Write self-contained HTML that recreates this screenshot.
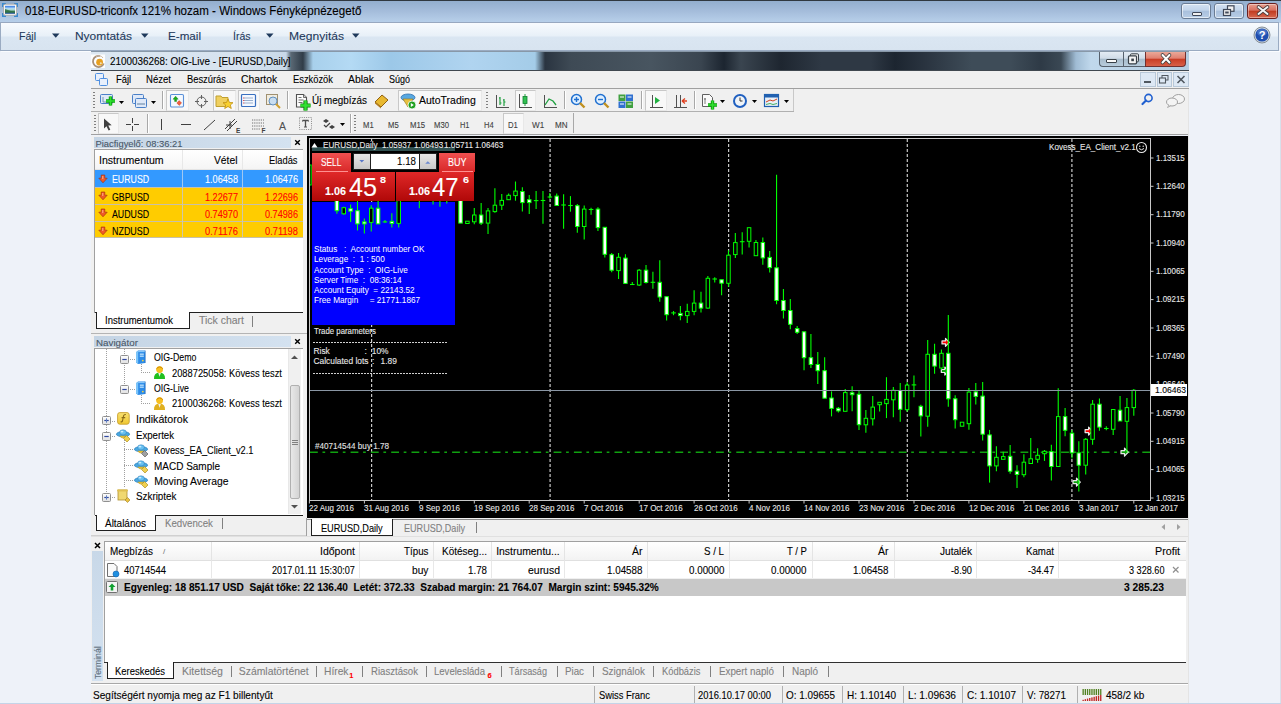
<!DOCTYPE html><html><head><meta charset="utf-8"><style>
*{margin:0;padding:0;box-sizing:border-box}
html,body{width:1281px;height:704px;overflow:hidden;background:#eef2f9;font-family:"Liberation Sans",sans-serif;position:relative}
.a{position:absolute}
.t{position:absolute;white-space:pre;line-height:1;-webkit-text-stroke:0.1px currentColor}
svg.a{overflow:visible}
</style></head><body>
<div class="a" style="left:0px;top:0px;width:1281px;height:1px;background:#303840;"></div>
<div class="a" style="left:0px;top:1px;width:1281px;height:22px;background:linear-gradient(#93aece,#a6bedc 50%,#b9d1eb);"></div>
<svg class="a" style="left:0px;top:0px" width="22" height="22"><path d="M2,3h4v1.5h-2.5v2.5h-1.5z M18,3h-4v1.5h2.5v2.5h1.5z M2,17h4v-1.5h-2.5v-2.5h-1.5z M18,17h-4v-1.5h2.5v-2.5h1.5z" fill="#3a8ad0"/><rect x="3.6" y="4.2" width="13" height="11" rx="1.5" fill="#fbfbfb" stroke="#a09890" stroke-width="0.7"/><defs><linearGradient id="pvsky" x1="0" y1="0" x2="0" y2="1"><stop offset="0" stop-color="#2a70e0"/><stop offset="0.4" stop-color="#c8ecf8"/><stop offset="0.75" stop-color="#3a8050"/><stop offset="1" stop-color="#1a4aa0"/></linearGradient></defs><rect x="5" y="5.8" width="10" height="8" fill="url(#pvsky)"/><path d="M5,9 Q8,10 11,11 L15,11.5 L15,12.5 L5,12.5z" fill="#2a6a40" opacity="0.8"/></svg>
<div class="t" style="left:25.40px;top:4.59px;font-size:12.3px;color:#000;transform:scaleX(0.9409);transform-origin:0 0;">018-EURUSD-triconfx 121% hozam - Windows Fényképnézegető</div>
<div class="a" style="left:1181px;top:2.5px;width:30px;height:16px;background:linear-gradient(#d4e2f2 0%,#c2d4ea 45%,#a9c0dc 50%,#b8cde6 100%);border:1px solid #6a7c94;border-radius:3px;box-shadow:inset 0 0 0 1px rgba(255,255,255,0.6)"></div>
<div class="a" style="left:1214px;top:2.5px;width:30px;height:16px;background:linear-gradient(#d4e2f2 0%,#c2d4ea 45%,#a9c0dc 50%,#b8cde6 100%);border:1px solid #6a7c94;border-radius:3px;box-shadow:inset 0 0 0 1px rgba(255,255,255,0.6)"></div>
<div class="a" style="left:1247px;top:2.5px;width:31px;height:16px;background:linear-gradient(#e8a090 0%,#d87060 45%,#c03a20 50%,#d86850 100%);border:1px solid #6a2020;border-radius:3px;box-shadow:inset 0 0 0 1px rgba(255,255,255,0.4)"></div>
<div class="a" style="left:1191.5px;top:12px;width:10px;height:4px;background:#f0f0f0;border:1px solid #404858;border-radius:1px"></div>
<svg class="a" style="left:1222px;top:5px" width="14" height="12"><rect x="5.5" y="0.8" width="6.5" height="5.5" fill="#f0f0f0" stroke="#404858" stroke-width="1.2"/><rect x="1.5" y="4.5" width="7" height="6" fill="#f0f0f0" stroke="#404858" stroke-width="1.2"/><rect x="3.2" y="6.5" width="3.5" height="2" fill="#404858"/></svg>
<svg class="a" style="left:1255px;top:5px" width="16" height="11"><path d="M3.5,2 L12.5,9 M12.5,2 L3.5,9" stroke="#4a3a3a" stroke-width="3.6" stroke-linecap="round"/><path d="M3.5,2 L12.5,9 M12.5,2 L3.5,9" stroke="#f4f4f4" stroke-width="2" stroke-linecap="round"/></svg>
<div class="a" style="left:0px;top:22px;width:1279px;height:29px;background:linear-gradient(#f8fbfe 0%,#e8f0f8 48%,#dae6f2 52%,#d8e4f0 100%);border:1px solid #9aabc2;border-top-color:#98a8c0"></div>
<div class="a" style="left:1px;top:51px;width:1279px;height:1px;background:#fafcff;"></div>
<div class="a" style="left:1280px;top:51px;width:1px;height:652px;background:#d8e0ea;"></div>
<div class="t" style="left:18.50px;top:30.81px;font-size:11.8px;color:#1e395b;transform:scaleX(0.8941);transform-origin:0 0;">Fájl</div>
<div class="t" style="left:75.00px;top:30.81px;font-size:11.8px;color:#1e395b;transform:scaleX(1.0107);transform-origin:0 0;">Nyomtatás</div>
<div class="t" style="left:168.00px;top:30.81px;font-size:11.8px;color:#1e395b;transform:scaleX(0.9870);transform-origin:0 0;">E-mail</div>
<div class="t" style="left:233.00px;top:30.81px;font-size:11.8px;color:#1e395b;transform:scaleX(0.8897);transform-origin:0 0;">Írás</div>
<div class="t" style="left:289.00px;top:30.81px;font-size:11.8px;color:#1e395b;transform:scaleX(1.0227);transform-origin:0 0;">Megnyitás</div>
<svg class="a" style="left:52px;top:33px" width="8" height="6"><polygon points="0,0.5 7.5,0.5 3.75,4.8" fill="#1e395b"/></svg>
<svg class="a" style="left:141px;top:33px" width="8" height="6"><polygon points="0,0.5 7.5,0.5 3.75,4.8" fill="#1e395b"/></svg>
<svg class="a" style="left:266px;top:33px" width="8" height="6"><polygon points="0,0.5 7.5,0.5 3.75,4.8" fill="#1e395b"/></svg>
<svg class="a" style="left:352px;top:33px" width="8" height="6"><polygon points="0,0.5 7.5,0.5 3.75,4.8" fill="#1e395b"/></svg>
<svg class="a" style="left:1253px;top:26px" width="18" height="18"><circle cx="9" cy="9" r="8" fill="#d0d8e0" stroke="#707880" stroke-width="0.8"/><circle cx="9" cy="9" r="6.6" fill="#1f4fb0"/><ellipse cx="9" cy="6.5" rx="5" ry="3.5" fill="#6a90d8" opacity="0.5"/><text x="9" y="13.2" font-family="Liberation Sans" font-weight="bold" font-size="11" fill="#fff" text-anchor="middle">?</text></svg>
<div class="a" style="left:0px;top:703px;width:1281px;height:1px;background:#c4d4e8;"></div>
<div class="a" style="left:91px;top:51px;width:1098px;height:20px;background:linear-gradient(90deg,#dce7f2 0px,#d6e2ef 150px,#c8d8e8 195px,#5a6874 200px,#303c48 212px,#a8d0ec 222px,#b4daf4 260px,#9cc8e8 300px,#b0d4f0 380px,#a4cce8 444px,#2a3440 454px,#3e4a55 480px,#485560 560px,#3a4550 610px,#1c2530 633px,#3a4550 650px,#1e2630 690px,#2e3844 730px,#2e3844 780px,#1c2530 804px,#2a3440 835px,#3e4c58 880px,#3e4c58 920px,#2e3a46 950px,#3a4854 970px,#a0bcd4 985px,#c0d8ec 1000px,#b4cce0 1098px);"></div>
<div class="a" style="left:91px;top:51px;width:1098px;height:1px;background:#8898a8;"></div>
<div class="a" style="left:91px;top:70px;width:1098px;height:1px;background:#404850;"></div>
<svg class="a" style="left:91px;top:54px" width="15" height="15"><rect x="0" y="0.5" width="14" height="13.5" fill="#fcfdfe"/><path d="M9,2 A5.6,5.6 0 1,0 12.8,9.5" fill="none" stroke="#a89078" stroke-width="1.8"/><path d="M5,3 A4.5,4.5 0 0,1 12,4" fill="none" stroke="#c8b8a8" stroke-width="1"/><circle cx="8.6" cy="8.2" r="3.4" fill="#e8a020"/><circle cx="9.8" cy="9.2" r="1" fill="#f0e0c0"/></svg>
<div class="t" style="left:109.60px;top:55.93px;font-size:10.6px;color:#000;transform:scaleX(0.9323);transform-origin:0 0;">2100036268: OIG-Live - [EURUSD,Daily]</div>
<div class="a" style="left:1098.5px;top:52px;width:24px;height:15px;background:linear-gradient(#e4ecf4 0%,#d0dce8 45%,#a8bccc 50%,#b8ccdc 100%);border:1px solid #56606c;border-right:none;border-top:none;border-radius:0 0 0 4px"></div>
<div class="a" style="left:1122.5px;top:52px;width:23px;height:15px;background:linear-gradient(#e4ecf4 0%,#d0dce8 45%,#a8bccc 50%,#b8ccdc 100%);border-left:1px solid #56606c;border-bottom:1px solid #56606c"></div>
<div class="a" style="left:1145.4px;top:52px;width:41px;height:15px;background:linear-gradient(#eaa898 0%,#e08070 45%,#c83c24 50%,#d86048 100%);border:1px solid #703030;border-top:none;border-radius:0 0 4px 0"></div>
<div class="a" style="left:1106px;top:59px;width:10.5px;height:4px;background:#fafafa;border:1px solid #384048;border-radius:1px"></div>
<svg class="a" style="left:1127px;top:53px" width="14" height="12"><rect x="3.5" y="0.8" width="8" height="8" rx="1" fill="#e8e8e8" stroke="#384048" stroke-width="1"/><rect x="1.5" y="2.8" width="8" height="8" rx="1" fill="#f4f4f4" stroke="#384048" stroke-width="1.2"/><rect x="4.3" y="5.6" width="2.6" height="2.6" fill="#384048"/></svg>
<svg class="a" style="left:1158px;top:53px" width="16" height="12"><path d="M4.5,2 L11.5,9.5 M11.5,2 L4.5,9.5" stroke="#404040" stroke-width="3.6" stroke-linecap="round"/><path d="M4.5,2 L11.5,9.5 M11.5,2 L4.5,9.5" stroke="#ffffff" stroke-width="2" stroke-linecap="round"/></svg>
<div class="a" style="left:91px;top:71px;width:1098px;height:17.5px;background:#f0f0f0;"></div>
<div class="a" style="left:91px;top:88px;width:1098px;height:1px;background:#a0a0a0;"></div>
<svg class="a" style="left:95px;top:73px" width="13" height="13"><rect x="0.5" y="0.5" width="8" height="7" rx="1" fill="#e8f0fc" stroke="#5090e0"/><rect x="4.5" y="5.5" width="8" height="7" rx="1" fill="#e8f0fc" stroke="#5090e0"/></svg>
<div class="t" style="left:115.50px;top:74.88px;font-size:10.3px;color:#000;transform:scaleX(0.9158);transform-origin:0 0;">Fájl</div>
<div class="t" style="left:146.00px;top:74.88px;font-size:10.3px;color:#000;transform:scaleX(0.9291);transform-origin:0 0;">Nézet</div>
<div class="t" style="left:187.00px;top:74.88px;font-size:10.3px;color:#000;transform:scaleX(0.9083);transform-origin:0 0;">Beszúrás</div>
<div class="t" style="left:241.00px;top:74.88px;font-size:10.3px;color:#000;">Chartok</div>
<div class="t" style="left:292.50px;top:74.88px;font-size:10.3px;color:#000;transform:scaleX(0.9075);transform-origin:0 0;">Eszközök</div>
<div class="t" style="left:348.00px;top:74.88px;font-size:10.3px;color:#000;transform:scaleX(1.0091);transform-origin:0 0;">Ablak</div>
<div class="t" style="left:389.00px;top:74.88px;font-size:10.3px;color:#000;transform:scaleX(0.8730);transform-origin:0 0;">Súgó</div>
<div class="a" style="left:1156.5px;top:72px;width:15.5px;height:14.5px;background:#dde8f4;border:1px solid #b8c8d8"></div>
<div class="a" style="left:1173px;top:72px;width:15.5px;height:14.5px;background:#dde8f4;border:1px solid #b8c8d8"></div>
<div class="a" style="left:1140px;top:72px;width:15.5px;height:14.5px;background:#dde8f4;border:1px solid #b8c8d8"></div>
<div class="a" style="left:1144px;top:81px;width:7px;height:1.6px;background:#505860;"></div>
<svg class="a" style="left:1159px;top:75px" width="10" height="9"><rect x="3" y="0.5" width="6" height="4.5" fill="none" stroke="#505860" stroke-width="1"/><rect x="0.5" y="3" width="6" height="5" fill="#dde8f4" stroke="#505860" stroke-width="1.1"/></svg>
<svg class="a" style="left:1176px;top:75px" width="10" height="9"><path d="M1.5,1 L8.5,8 M8.5,1 L1.5,8" stroke="#505860" stroke-width="1.6"/></svg>
<div class="a" style="left:91px;top:89px;width:1098px;height:45.5px;background:#f0f0f0;"></div>
<div class="a" style="left:91px;top:111px;width:703px;height:1px;background:#b0b0b0;"></div>
<div class="a" style="left:91px;top:134px;width:1098px;height:1px;background:#a0a0a0;"></div>
<div class="a" style="left:793px;top:89px;width:1px;height:22px;background:#c8c8c8;"></div>
<div class="a" style="left:93px;top:92px;width:2px;height:17px;background:repeating-linear-gradient(#808080 0 1px,transparent 1px 3px);"></div>
<svg class="a" style="left:99px;top:93px" width="18" height="16"><rect x="1.5" y="1.5" width="12" height="9" rx="1" fill="#dfe9f8" stroke="#4a80c8"/><path d="M4,4 v5 h7" stroke="#6080a0" fill="none" stroke-width="0.8"/><path d="M7,8 h9 M11.5,3.5 v9" stroke="#0a9a0a" stroke-width="3.4"/><path d="M7,8 h9 M11.5,3.5 v9" stroke="#30e030" stroke-width="1.6"/></svg>
<svg class="a" style="left:119px;top:101px" width="6" height="4"><polygon points="0,0 5,0 2.5,3" fill="#000"/></svg>
<svg class="a" style="left:131px;top:93px" width="18" height="16"><rect x="1.5" y="1.5" width="11" height="9" rx="1" fill="#dfe9f8" stroke="#4a80c8"/><rect x="4.5" y="5.5" width="11" height="9" rx="1" fill="#dfe9f8" stroke="#4a80c8"/><path d="M6,11 h8" stroke="#6080a0" stroke-width="1"/></svg>
<svg class="a" style="left:151px;top:101px" width="6" height="4"><polygon points="0,0 5,0 2.5,3" fill="#000"/></svg>
<div class="a" style="left:162px;top:91px;width:1px;height:18px;background:#a8a8a8;"></div><div class="a" style="left:163px;top:91px;width:1px;height:18px;background:#ffffff;"></div>
<div class="a" style="left:166px;top:90px;width:23px;height:21px;background:#f8f8f8;border:1px solid #c8c8c8;border-right-color:#e8e8e8;border-bottom-color:#e8e8e8"></div>
<svg class="a" style="left:170px;top:94px" width="15" height="14"><rect x="0.5" y="0.5" width="13" height="12.5" rx="1.2" fill="#f4f8fe" stroke="#5a90d8" stroke-width="1.1"/><path d="M3,5.2 L5.6,2.2 L8.2,5.2 H6.6 V7.4 H4.6 V5.2z" fill="#18b018" stroke="#0a700a" stroke-width="0.4"/><path d="M9.2,6.6 L11.6,9 L9.2,11.4 L6.8,9z" fill="#f06040" stroke="#c03010" stroke-width="0.4"/></svg>
<svg class="a" style="left:194px;top:94px" width="15" height="15"><circle cx="7.5" cy="7.5" r="4.5" fill="none" stroke="#606060" stroke-width="1"/><path d="M7.5,1 v4 M7.5,10 v4 M1,7.5 h4 M10,7.5 h4" stroke="#606060" stroke-width="1"/></svg>
<div class="a" style="left:213px;top:90px;width:23px;height:21px;background:#f8f8f8;border:1px solid #c8c8c8;border-right-color:#e8e8e8;border-bottom-color:#e8e8e8"></div>
<svg class="a" style="left:215px;top:93px" width="19" height="16"><path d="M1,3 h5 l1,1.5 h6 v9 h-12z" fill="#f0d060" stroke="#c0a030"/><polygon points="13,6 14.5,9.5 18,9.7 15.3,12 16.3,15.5 13,13.5 9.7,15.5 10.7,12 8,9.7 11.5,9.5" fill="#f8d030" stroke="#c09010" stroke-width="0.8"/></svg>
<div class="a" style="left:238px;top:90px;width:22px;height:21px;background:#f8f8f8;border:1px solid #c8c8c8;border-right-color:#e8e8e8;border-bottom-color:#e8e8e8"></div>
<svg class="a" style="left:241px;top:94px" width="16" height="14"><rect x="0.5" y="0.5" width="14" height="12" rx="1" fill="#f4f8ff" stroke="#3a70c0" stroke-width="1.2"/><path d="M3,4 h9 M3,6.5 h9 M3,9 h9" stroke="#90a8c8" stroke-width="0.9"/><path d="M2.2,4 h1 M2.2,6.5 h1 M2.2,9 h1" stroke="#e03030" stroke-width="1"/></svg>
<svg class="a" style="left:265px;top:93px" width="17" height="17"><rect x="1.5" y="1.5" width="11" height="10" fill="#f0ece0" stroke="#a09070"/><circle cx="8" cy="8" r="4" fill="#c8ddf0" stroke="#6090c0"/><path d="M11,11 l4,4" stroke="#d0a030" stroke-width="2"/></svg>
<div class="a" style="left:287px;top:91px;width:1px;height:18px;background:#a8a8a8;"></div><div class="a" style="left:288px;top:91px;width:1px;height:18px;background:#ffffff;"></div>
<svg class="a" style="left:295px;top:93px" width="16" height="17"><path d="M1.5,1.5 h7 l3,3 v9.5 h-10z" fill="#fcfcfc" stroke="#505050" stroke-width="1.1"/><path d="M8.5,1.5 v3 h3" fill="#d0d0d0" stroke="#505050" stroke-width="0.8"/><path d="M3.5,4.5 h3 M3.5,7 h5 M3.5,9.5 h4" stroke="#707070" stroke-width="1"/><path d="M5.5,12.5 h10 M10.5,7.5 v10" stroke="#108010" stroke-width="4.2"/><path d="M5.5,12.5 h10 M10.5,7.5 v10" stroke="#30e030" stroke-width="2.4"/></svg>
<div class="t" style="left:312.00px;top:96.07px;font-size:10.2px;color:#000;transform:scaleX(0.9702);transform-origin:0 0;">Új megbízás</div>
<svg class="a" style="left:373px;top:93px" width="17" height="16"><path d="M2,9 L9,2 L15,7 L8,14z" fill="#e8b830" stroke="#906010"/><path d="M2,9 L8,14 L8,15.5 L2,10.5z" fill="#b07818"/></svg>
<div class="a" style="left:398px;top:90px;width:84px;height:21px;background:#f8f8f8;border:1px solid #c8c8c8;border-right-color:#e8e8e8;border-bottom-color:#e8e8e8"></div>
<svg class="a" style="left:400px;top:92px" width="17" height="18"><ellipse cx="8" cy="5.5" rx="7" ry="3.5" fill="#58a8e0" stroke="#3070b0" stroke-width="0.8"/><path d="M3,7 L8,15 L13,7z" fill="#e8c040" stroke="#a08020" stroke-width="0.7"/><circle cx="12" cy="13" r="4" fill="#20a020" stroke="#fff" stroke-width="0.8"/><path d="M10.8,11 v4 l3,-2z" fill="#fff"/></svg>
<div class="t" style="left:418.70px;top:95.97px;font-size:10.2px;color:#000;transform:scaleX(1.0292);transform-origin:0 0;">AutoTrading</div>
<div class="a" style="left:486px;top:92px;width:2px;height:17px;background:repeating-linear-gradient(#808080 0 1px,transparent 1px 3px);"></div>
<svg class="a" style="left:495px;top:94px" width="15" height="15"><path d="M1,13.5 h13 M1.5,1 v13" stroke="#505050" stroke-width="1"/><path d="M5,3 v8 M4,4 h1 M5,9 h1.5 M9,5 v7 M8,6 h1 M9,8 h1.5" stroke="#20a040" stroke-width="1.2"/></svg>
<div class="a" style="left:515px;top:90px;width:21px;height:21px;background:#f8f8f8;border:1px solid #c8c8c8;border-right-color:#e8e8e8;border-bottom-color:#e8e8e8"></div>
<svg class="a" style="left:518px;top:93px" width="15" height="16"><path d="M1,14.5 h13 M1.5,1 v14" stroke="#505050" stroke-width="1"/><path d="M7,1 v12" stroke="#20a040" stroke-width="1"/><rect x="5" y="3.5" width="4" height="7" fill="#30c050" stroke="#108030" stroke-width="0.8"/></svg>
<svg class="a" style="left:543px;top:94px" width="15" height="15"><path d="M1,13.5 h13 M1.5,1 v13" stroke="#505050" stroke-width="1"/><path d="M2,11 L6,5 L10,7 L13,11" fill="none" stroke="#20a040" stroke-width="1.3"/></svg>
<div class="a" style="left:564px;top:91px;width:1px;height:18px;background:#a8a8a8;"></div><div class="a" style="left:565px;top:91px;width:1px;height:18px;background:#ffffff;"></div>
<svg class="a" style="left:570px;top:93px" width="16" height="16"><circle cx="6.5" cy="6.5" r="5" fill="#e0f0ff" stroke="#2070d0" stroke-width="1.5"/><path d="M4,6.5 h5 M6.5,4 v5" stroke="#2070d0" stroke-width="1.4"/><path d="M10,10 l4.5,4.5" stroke="#c09020" stroke-width="2.4"/></svg>
<svg class="a" style="left:594px;top:93px" width="16" height="16"><circle cx="6.5" cy="6.5" r="5" fill="#e0f0ff" stroke="#2070d0" stroke-width="1.5"/><path d="M4,6.5 h5" stroke="#2070d0" stroke-width="1.4"/><path d="M10,10 l4.5,4.5" stroke="#c09020" stroke-width="2.4"/></svg>
<svg class="a" style="left:618px;top:94px" width="16" height="15"><rect x="0.5" y="0.5" width="7" height="6.5" fill="#40a040"/><rect x="8" y="0.5" width="7" height="6.5" fill="#3070d0"/><rect x="0.5" y="7.5" width="7" height="6.5" fill="#3070d0"/><rect x="8" y="7.5" width="7" height="6.5" fill="#40a040"/><path d="M2,3 h4 M9.5,3 h4 M2,10 h4 M9.5,10 h4" stroke="#fff" stroke-width="1"/></svg>
<div class="a" style="left:641px;top:91px;width:1px;height:18px;background:#a8a8a8;"></div><div class="a" style="left:642px;top:91px;width:1px;height:18px;background:#ffffff;"></div>
<div class="a" style="left:645px;top:90px;width:22px;height:21px;background:#f8f8f8;border:1px solid #c8c8c8;border-right-color:#e8e8e8;border-bottom-color:#e8e8e8"></div>
<svg class="a" style="left:649px;top:94px" width="15" height="15"><path d="M1,13.5 h13 M3.5,1 v13" stroke="#505050" stroke-width="1"/><path d="M6,3 v7 l5,-3.5z" fill="#20b040"/></svg>
<svg class="a" style="left:673px;top:94px" width="15" height="15"><path d="M1,13.5 h13 M3.5,1 v13 M7.5,1 v13" stroke="#505050" stroke-width="1"/><path d="M9,7 h5 M9,7 l3,-2.5 M9,7 l3,2.5" stroke="#e04020" stroke-width="1.3"/></svg>
<div class="a" style="left:694px;top:91px;width:1px;height:18px;background:#a8a8a8;"></div><div class="a" style="left:695px;top:91px;width:1px;height:18px;background:#ffffff;"></div>
<svg class="a" style="left:701px;top:93px" width="18" height="17"><path d="M1.5,1.5 h7 l3,3 v9 h-10z" fill="#fafafa" stroke="#606060"/><path d="M4,5 v6 M3,6 h2" stroke="#606060" stroke-width="0.8"/><path d="M7,12 h9 M11.5,7.5 v9" stroke="#0a9a0a" stroke-width="3.4"/><path d="M7,12 h9 M11.5,7.5 v9" stroke="#30e030" stroke-width="1.6"/></svg>
<svg class="a" style="left:720px;top:100px" width="6" height="4"><polygon points="0,0 5,0 2.5,3" fill="#000"/></svg>
<svg class="a" style="left:732px;top:93px" width="16" height="16"><circle cx="8" cy="8" r="7" fill="#2060c0"/><circle cx="8" cy="8" r="5" fill="#f0f4f8"/><path d="M8,4.5 v3.5 h2.5" stroke="#303030" stroke-width="1" fill="none"/></svg>
<svg class="a" style="left:752px;top:100px" width="6" height="4"><polygon points="0,0 5,0 2.5,3" fill="#000"/></svg>
<svg class="a" style="left:764px;top:93px" width="16" height="16"><rect x="0.5" y="1.5" width="14" height="12" fill="#e8f0f8" stroke="#2060b0" stroke-width="1.2"/><rect x="1" y="2" width="13" height="2.5" fill="#2060b0"/><path d="M2,9 l4,-2 l3,1 l4,-2" stroke="#d04020" fill="none" stroke-width="1"/><path d="M2,11.5 l4,-1 l3,1 l4,-1" stroke="#20a040" fill="none" stroke-width="0.8"/></svg>
<svg class="a" style="left:784px;top:100px" width="6" height="4"><polygon points="0,0 5,0 2.5,3" fill="#000"/></svg>
<svg class="a" style="left:1141px;top:93px" width="13" height="13"><circle cx="7.5" cy="5" r="3.6" fill="none" stroke="#2060d0" stroke-width="1.6"/><path d="M5,7.5 L1.5,11" stroke="#2060d0" stroke-width="2.2" stroke-linecap="round"/></svg>
<svg class="a" style="left:1165px;top:93px" width="21" height="15"><ellipse cx="13.5" cy="6" rx="6" ry="4.5" fill="#f4f4f4" stroke="#a0a0a0"/><ellipse cx="7" cy="9" rx="5.5" ry="4" fill="#f4f4f4" stroke="#a0a0a0"/><path d="M4,12 l-1.5,2.5 l3,-1.5" fill="#f4f4f4" stroke="#a0a0a0" stroke-width="0.8"/></svg>
<div class="a" style="left:94px;top:115px;width:2px;height:17px;background:repeating-linear-gradient(#808080 0 1px,transparent 1px 3px);"></div>
<div class="a" style="left:98px;top:113px;width:21px;height:20.5px;background:#f8f8f8;border:1px solid #c8c8c8;border-right-color:#e8e8e8;border-bottom-color:#e8e8e8"></div>
<svg class="a" style="left:103px;top:118px" width="10" height="13"><path d="M1,0.5 L1,10.5 L3.5,8.2 L5.6,12.5 L7.3,11.7 L5.3,7.5 L8.7,7.3 z" fill="#404040"/></svg>
<svg class="a" style="left:125px;top:117px" width="15" height="15"><path d="M7.5,1 v5 M7.5,9 v5 M1,7.5 h5 M9,7.5 h5" stroke="#404040" stroke-width="1"/></svg>
<div class="a" style="left:147px;top:114px;width:1px;height:19px;background:#a8a8a8;"></div><div class="a" style="left:148px;top:114px;width:1px;height:19px;background:#ffffff;"></div>
<div class="a" style="left:161px;top:119px;width:1.2px;height:11px;background:#404040;"></div>
<div class="a" style="left:181px;top:124px;width:10px;height:1.2px;background:#404040;"></div>
<svg class="a" style="left:203px;top:119px" width="13" height="12"><path d="M1,11 L12,1" stroke="#404040" stroke-width="1"/></svg>
<svg class="a" style="left:224px;top:117px" width="17" height="17"><path d="M1,12 L11,2 M3,14 L13,4 M2,8 l6,0 M6,4 l0,8" stroke="#404040" stroke-width="1"/><text x="12" y="16" font-family="Liberation Sans" font-size="6.5" font-weight="bold" fill="#404040">E</text></svg>
<svg class="a" style="left:251px;top:117px" width="17" height="17"><path d="M1,3 h12 M1,6 h12 M1,9 h12 M1,12 h8" stroke="#606060" stroke-width="0.9" stroke-dasharray="1.2,1"/><text x="10.5" y="16" font-family="Liberation Sans" font-size="6.5" font-weight="bold" fill="#404040">F</text></svg>
<div class="t" style="left:279.00px;top:121.01px;font-size:10.5px;color:#505050;">A</div>
<svg class="a" style="left:299px;top:117px" width="14" height="14"><rect x="0.5" y="0.5" width="12" height="12" fill="none" stroke="#707070" stroke-width="0.8" stroke-dasharray="1,1.2"/><path d="M3.5,3.5 h6 M6.5,3.5 v6.5" stroke="#505050" stroke-width="1.3"/><path d="M3.5,3.5 v1 M9.5,3.5 v1 M5,10 h3" stroke="#505050" stroke-width="1"/></svg>
<svg class="a" style="left:322px;top:118px" width="14" height="13"><path d="M1,3 l3,-2 l3,2 l-3,2z M7,9 l3,-2 l3,2 l-3,2z" fill="#404040"/><path d="M2,7 l2,2 l4,-4" stroke="#404040" fill="none" stroke-width="1.2"/></svg>
<svg class="a" style="left:340px;top:123px" width="6" height="4"><polygon points="0,0 5,0 2.5,3" fill="#000"/></svg>
<div class="a" style="left:350px;top:114px;width:1px;height:19px;background:#a8a8a8;"></div><div class="a" style="left:351px;top:114px;width:1px;height:19px;background:#ffffff;"></div>
<div class="a" style="left:354px;top:115px;width:2px;height:17px;background:repeating-linear-gradient(#808080 0 1px,transparent 1px 3px);"></div>
<div class="t" style="left:363.30px;top:121.21px;font-size:9.2px;color:#404040;transform:scaleX(0.8372);transform-origin:0 0;">M1</div>
<div class="t" style="left:387.70px;top:121.21px;font-size:9.2px;color:#404040;transform:scaleX(0.8372);transform-origin:0 0;">M5</div>
<div class="t" style="left:409.60px;top:121.21px;font-size:9.2px;color:#404040;transform:scaleX(0.8493);transform-origin:0 0;">M15</div>
<div class="t" style="left:433.70px;top:121.21px;font-size:9.2px;color:#404040;transform:scaleX(0.8381);transform-origin:0 0;">M30</div>
<div class="t" style="left:460.30px;top:121.21px;font-size:9.2px;color:#404040;transform:scaleX(0.8078);transform-origin:0 0;">H1</div>
<div class="t" style="left:483.60px;top:121.21px;font-size:9.2px;color:#404040;transform:scaleX(0.8248);transform-origin:0 0;">H4</div>
<div class="a" style="left:503px;top:113px;width:21px;height:20.5px;background:#f8f8f8;border:1px solid #c8c8c8;border-right-color:#e8e8e8;border-bottom-color:#e8e8e8"></div>
<div class="t" style="left:508.00px;top:121.21px;font-size:9.2px;color:#404040;transform:scaleX(0.8418);transform-origin:0 0;">D1</div>
<div class="t" style="left:531.70px;top:121.21px;font-size:9.2px;color:#404040;transform:scaleX(0.8841);transform-origin:0 0;">W1</div>
<div class="t" style="left:554.60px;top:121.21px;font-size:9.2px;color:#404040;transform:scaleX(0.8806);transform-origin:0 0;">MN</div>
<div class="a" style="left:573px;top:113px;width:1px;height:20px;background:#a8a8a8;"></div>
<div class="a" style="left:91px;top:135.5px;width:216px;height:400px;background:#f0f0f0;"></div>
<div class="a" style="left:94px;top:137px;width:197px;height:10.5px;background:linear-gradient(90deg,#c4d4e4,#d4e2f0);"></div>
<div class="t" style="left:95.50px;top:139.04px;font-size:9.4px;color:#4a5868;">Piacfigyelő: 08:36:21</div>
<svg class="a" style="left:293.8px;top:138.6px" width="7" height="7"><path d="M1.2,1.2 L5.8,5.8 M5.8,1.2 L1.2,5.8" stroke="#000" stroke-width="1.4"/></svg>
<div class="a" style="left:94px;top:149px;width:209px;height:163.5px;background:#ffffff;border-left:1px solid #a0a0a0;border-top:1px solid #a0a0a0"></div>
<div class="a" style="left:95px;top:150px;width:207.5px;height:19.5px;background:linear-gradient(#ffffff,#f4f4f4);"></div>
<div class="a" style="left:95px;top:169px;width:207.5px;height:1px;background:#e4e4e4;"></div>
<div class="a" style="left:182px;top:150px;width:1px;height:19px;background:#e8e8e8;"></div>
<div class="a" style="left:242px;top:150px;width:1px;height:19px;background:#e8e8e8;"></div>
<div class="t" style="left:99.30px;top:155.90px;font-size:10.4px;color:#000;transform:scaleX(1.0176);transform-origin:0 0;">Instrumentum</div>
<div class="t" style="left:214.00px;top:155.90px;font-size:10.4px;color:#000;transform:scaleX(0.9914);transform-origin:0 0;">Vétel</div>
<div class="t" style="left:268.50px;top:155.90px;font-size:10.4px;color:#000;transform:scaleX(0.8962);transform-origin:0 0;">Eladás</div>
<div class="a" style="left:95px;top:170.2px;width:207.5px;height:17.35px;background:#3399ff;"></div>
<div class="a" style="left:95px;top:186.74999999999997px;width:207.5px;height:0.8px;background:#c8c0a8;"></div>
<div class="a" style="left:182px;top:170.2px;width:1px;height:17.35px;background:#a0c8f0;"></div>
<div class="a" style="left:242px;top:170.2px;width:1px;height:17.35px;background:#a0c8f0;"></div>
<svg class="a" style="left:98px;top:173.7px" width="10" height="10"><path d="M3.2,1 h3.6 v3.2 h2.4 L5,8.8 L0.8,4.2 H3.2z" fill="#f05a28" stroke="#a02808" stroke-width="0.6" stroke-linejoin="round"/><path d="M4,2 h1.4 v3 h-1.4z" fill="#ffb090" opacity="0.7"/></svg>
<div class="t" style="left:112.00px;top:175.20px;font-size:10.4px;color:#ffffff;transform:scaleX(0.8471);transform-origin:0 0;">EURUSD</div>
<div class="t" style="left:205.00px;top:175.20px;font-size:10.4px;color:#ffffff;transform:scaleX(0.8778);transform-origin:0 0;">1.06458</div>
<div class="t" style="left:264.50px;top:175.20px;font-size:10.4px;color:#ffffff;transform:scaleX(0.8778);transform-origin:0 0;">1.06476</div>
<div class="a" style="left:95px;top:187.54999999999998px;width:207.5px;height:17.35px;background:#ffcc00;"></div>
<div class="a" style="left:95px;top:204.09999999999997px;width:207.5px;height:0.8px;background:#c8c0a8;"></div>
<div class="a" style="left:182px;top:187.54999999999998px;width:1px;height:17.35px;background:#d0c8a8;"></div>
<div class="a" style="left:242px;top:187.54999999999998px;width:1px;height:17.35px;background:#d0c8a8;"></div>
<svg class="a" style="left:98px;top:191.04999999999998px" width="10" height="10"><path d="M3.2,1 h3.6 v3.2 h2.4 L5,8.8 L0.8,4.2 H3.2z" fill="#f05a28" stroke="#a02808" stroke-width="0.6" stroke-linejoin="round"/><path d="M4,2 h1.4 v3 h-1.4z" fill="#ffb090" opacity="0.7"/></svg>
<div class="t" style="left:112.00px;top:192.55px;font-size:10.4px;color:#000000;transform:scaleX(0.8470);transform-origin:0 0;">GBPUSD</div>
<div class="t" style="left:205.00px;top:192.55px;font-size:10.4px;color:#ff0000;transform:scaleX(0.8778);transform-origin:0 0;">1.22677</div>
<div class="t" style="left:264.50px;top:192.55px;font-size:10.4px;color:#ff0000;transform:scaleX(0.8778);transform-origin:0 0;">1.22696</div>
<div class="a" style="left:95px;top:204.89999999999998px;width:207.5px;height:17.35px;background:#ffcc00;"></div>
<div class="a" style="left:95px;top:221.44999999999996px;width:207.5px;height:0.8px;background:#c8c0a8;"></div>
<div class="a" style="left:182px;top:204.89999999999998px;width:1px;height:17.35px;background:#d0c8a8;"></div>
<div class="a" style="left:242px;top:204.89999999999998px;width:1px;height:17.35px;background:#d0c8a8;"></div>
<svg class="a" style="left:98px;top:208.39999999999998px" width="10" height="10"><path d="M3.2,1 h3.6 v3.2 h2.4 L5,8.8 L0.8,4.2 H3.2z" fill="#f05a28" stroke="#a02808" stroke-width="0.6" stroke-linejoin="round"/><path d="M4,2 h1.4 v3 h-1.4z" fill="#ffb090" opacity="0.7"/></svg>
<div class="t" style="left:112.00px;top:209.90px;font-size:10.4px;color:#000000;transform:scaleX(0.8471);transform-origin:0 0;">AUDUSD</div>
<div class="t" style="left:205.00px;top:209.90px;font-size:10.4px;color:#ff0000;transform:scaleX(0.8778);transform-origin:0 0;">0.74970</div>
<div class="t" style="left:264.50px;top:209.90px;font-size:10.4px;color:#ff0000;transform:scaleX(0.8778);transform-origin:0 0;">0.74986</div>
<div class="a" style="left:95px;top:222.25px;width:207.5px;height:16px;background:#ffcc00;"></div>
<div class="a" style="left:95px;top:237.45px;width:207.5px;height:0.8px;background:#c8c0a8;"></div>
<div class="a" style="left:182px;top:222.25px;width:1px;height:16px;background:#d0c8a8;"></div>
<div class="a" style="left:242px;top:222.25px;width:1px;height:16px;background:#d0c8a8;"></div>
<svg class="a" style="left:98px;top:225.75px" width="10" height="10"><path d="M3.2,1 h3.6 v3.2 h2.4 L5,8.8 L0.8,4.2 H3.2z" fill="#f05a28" stroke="#a02808" stroke-width="0.6" stroke-linejoin="round"/><path d="M4,2 h1.4 v3 h-1.4z" fill="#ffb090" opacity="0.7"/></svg>
<div class="t" style="left:112.00px;top:227.25px;font-size:10.4px;color:#000000;transform:scaleX(0.8585);transform-origin:0 0;">NZDUSD</div>
<div class="t" style="left:205.00px;top:227.25px;font-size:10.4px;color:#ff0000;transform:scaleX(0.8962);transform-origin:0 0;">0.71176</div>
<div class="t" style="left:264.50px;top:227.25px;font-size:10.4px;color:#ff0000;transform:scaleX(0.8962);transform-origin:0 0;">0.71198</div>
<div class="a" style="left:95px;top:312px;width:208px;height:18px;background:#f0f0f0;"></div>
<div class="a" style="left:95px;top:312px;width:208px;height:1px;background:#202020;"></div>
<div class="a" style="left:95.5px;top:312px;width:94px;height:16.5px;background:#ffffff;border:1px solid #202020;border-top:none"></div>
<div class="t" style="left:104.50px;top:316.10px;font-size:10.4px;color:#000;transform:scaleX(0.9120);transform-origin:0 0;">Instrumentumok</div>
<div class="t" style="left:198.80px;top:316.10px;font-size:10.4px;color:#808080;transform:scaleX(1.0070);transform-origin:0 0;">Tick chart</div>
<div class="a" style="left:252px;top:316px;width:1px;height:11px;background:#808080;"></div>
<div class="a" style="left:91px;top:333px;width:216px;height:1px;background:#b4b4b4;"></div>
<div class="a" style="left:94px;top:336px;width:197px;height:10.7px;background:linear-gradient(90deg,#c4d4e4,#d4e2f0);"></div>
<div class="t" style="left:95.50px;top:337.54px;font-size:9.4px;color:#4a5868;transform:scaleX(1.0440);transform-origin:0 0;">Navigátor</div>
<svg class="a" style="left:294px;top:338.3px" width="7" height="7"><path d="M1.2,1.2 L5.8,5.8 M5.8,1.2 L1.2,5.8" stroke="#000" stroke-width="1.4"/></svg>
<div class="a" style="left:94px;top:348px;width:209px;height:166.5px;background:#ffffff;border-left:1px solid #a0a0a0;border-top:1px solid #a0a0a0"></div>
<div class="a" style="left:105.5px;top:349px;width:1px;height:146px;background:repeating-linear-gradient(#a0a0a0 0 1px,transparent 1px 2px);"></div>
<div class="a" style="left:123.5px;top:349px;width:1px;height:41px;background:repeating-linear-gradient(#a0a0a0 0 1px,transparent 1px 2px);"></div>
<div class="a" style="left:141px;top:364px;width:1px;height:7px;background:repeating-linear-gradient(#a0a0a0 0 1px,transparent 1px 2px);"></div>
<div class="a" style="left:141px;top:372px;width:10px;height:1px;background:repeating-linear-gradient(90deg,#a0a0a0 0 1px,transparent 1px 2px);"></div>
<div class="a" style="left:141px;top:395px;width:1px;height:7px;background:repeating-linear-gradient(#a0a0a0 0 1px,transparent 1px 2px);"></div>
<div class="a" style="left:141px;top:403px;width:10px;height:1px;background:repeating-linear-gradient(90deg,#a0a0a0 0 1px,transparent 1px 2px);"></div>
<div class="a" style="left:123.5px;top:440px;width:1px;height:47px;background:repeating-linear-gradient(#a0a0a0 0 1px,transparent 1px 2px);"></div>
<div class="a" style="left:124px;top:449px;width:9px;height:1px;background:repeating-linear-gradient(90deg,#a0a0a0 0 1px,transparent 1px 2px);"></div>
<div class="a" style="left:124px;top:465px;width:9px;height:1px;background:repeating-linear-gradient(90deg,#a0a0a0 0 1px,transparent 1px 2px);"></div>
<div class="a" style="left:124px;top:480px;width:9px;height:1px;background:repeating-linear-gradient(90deg,#a0a0a0 0 1px,transparent 1px 2px);"></div>
<div class="a" style="left:128px;top:358.5px;width:7px;height:1px;background:repeating-linear-gradient(90deg,#a0a0a0 0 1px,transparent 1px 2px);"></div>
<div class="a" style="left:128px;top:389px;width:7px;height:1px;background:repeating-linear-gradient(90deg,#a0a0a0 0 1px,transparent 1px 2px);"></div>
<div class="a" style="left:110px;top:420.5px;width:6px;height:1px;background:repeating-linear-gradient(90deg,#a0a0a0 0 1px,transparent 1px 2px);"></div>
<div class="a" style="left:110px;top:436px;width:6px;height:1px;background:repeating-linear-gradient(90deg,#a0a0a0 0 1px,transparent 1px 2px);"></div>
<div class="a" style="left:110px;top:497px;width:6px;height:1px;background:repeating-linear-gradient(90deg,#a0a0a0 0 1px,transparent 1px 2px);"></div>
<svg class="a" style="left:119.5px;top:354.5px" width="9" height="9"><defs><linearGradient id="bxg" x1="0" y1="0" x2="0" y2="1"><stop offset="0" stop-color="#ffffff"/><stop offset="1" stop-color="#e0e0e0"/></linearGradient></defs><rect x="0.5" y="0.5" width="8" height="8" rx="1" fill="url(#bxg)" stroke="#909090"/><path d="M2.3,4.5 h4.4" stroke="#3048a0" stroke-width="1.2"/></svg>
<svg class="a" style="left:119.5px;top:385px" width="9" height="9"><defs><linearGradient id="bxg" x1="0" y1="0" x2="0" y2="1"><stop offset="0" stop-color="#ffffff"/><stop offset="1" stop-color="#e0e0e0"/></linearGradient></defs><rect x="0.5" y="0.5" width="8" height="8" rx="1" fill="url(#bxg)" stroke="#909090"/><path d="M2.3,4.5 h4.4" stroke="#3048a0" stroke-width="1.2"/></svg>
<svg class="a" style="left:101.8px;top:416px" width="9" height="9"><defs><linearGradient id="bxg" x1="0" y1="0" x2="0" y2="1"><stop offset="0" stop-color="#ffffff"/><stop offset="1" stop-color="#e0e0e0"/></linearGradient></defs><rect x="0.5" y="0.5" width="8" height="8" rx="1" fill="url(#bxg)" stroke="#909090"/><path d="M2.3,4.5 h4.4" stroke="#3048a0" stroke-width="1.2"/><path d="M4.5,2.3 v4.4" stroke="#6080c0" stroke-width="1"/></svg>
<svg class="a" style="left:101.8px;top:431.5px" width="9" height="9"><defs><linearGradient id="bxg" x1="0" y1="0" x2="0" y2="1"><stop offset="0" stop-color="#ffffff"/><stop offset="1" stop-color="#e0e0e0"/></linearGradient></defs><rect x="0.5" y="0.5" width="8" height="8" rx="1" fill="url(#bxg)" stroke="#909090"/><path d="M2.3,4.5 h4.4" stroke="#3048a0" stroke-width="1.2"/></svg>
<svg class="a" style="left:101.8px;top:492.5px" width="9" height="9"><defs><linearGradient id="bxg" x1="0" y1="0" x2="0" y2="1"><stop offset="0" stop-color="#ffffff"/><stop offset="1" stop-color="#e0e0e0"/></linearGradient></defs><rect x="0.5" y="0.5" width="8" height="8" rx="1" fill="url(#bxg)" stroke="#909090"/><path d="M2.3,4.5 h4.4" stroke="#3048a0" stroke-width="1.2"/><path d="M4.5,2.3 v4.4" stroke="#6080c0" stroke-width="1"/></svg>
<svg class="a" style="left:135px;top:350px" width="11" height="15"><path d="M1,2.2 L3.2,0.6 L10.2,0.6 L10.2,13 L3.2,14 L1,12.6z" fill="#2a8ae8"/><path d="M1,2.2 L3.2,0.6 L3.2,14 L1,12.6z" fill="#7cc4f8"/><path d="M3.2,1.6 h7" stroke="#a8dcff" stroke-width="0.8"/><rect x="4.8" y="3.6" width="4" height="1.1" fill="#d8f0ff"/><rect x="4.8" y="5.6" width="4" height="1.1" fill="#d8f0ff"/><circle cx="7.8" cy="10.6" r="0.9" fill="#f0d040"/><path d="M10.2,0.6 v12.4" stroke="#1a60b0" stroke-width="0.6"/></svg>
<svg class="a" style="left:135px;top:381px" width="11" height="15"><path d="M1,2.2 L3.2,0.6 L10.2,0.6 L10.2,13 L3.2,14 L1,12.6z" fill="#2a8ae8"/><path d="M1,2.2 L3.2,0.6 L3.2,14 L1,12.6z" fill="#7cc4f8"/><path d="M3.2,1.6 h7" stroke="#a8dcff" stroke-width="0.8"/><rect x="4.8" y="3.6" width="4" height="1.1" fill="#d8f0ff"/><rect x="4.8" y="5.6" width="4" height="1.1" fill="#d8f0ff"/><circle cx="7.8" cy="10.6" r="0.9" fill="#f0d040"/><path d="M10.2,0.6 v12.4" stroke="#1a60b0" stroke-width="0.6"/></svg>
<svg class="a" style="left:153px;top:364.8px" width="13" height="15"><path d="M1,14 Q0.6,8 6.5,7.6 Q12.4,8 12,14z" fill="#20c020"/><path d="M5.3,8 L6.6,11.8 L7.8,8z" fill="#f0f0f0"/><circle cx="6.6" cy="4.6" r="3.4" fill="#f8c020"/><path d="M3.4,3.8 Q6.6,0 9.8,3.8" fill="none" stroke="#d08a00" stroke-width="1"/></svg>
<svg class="a" style="left:153px;top:395.8px" width="13" height="15"><path d="M1,14 Q0.6,8 6.5,7.6 Q12.4,8 12,14z" fill="#e0b020"/><path d="M5.3,8 L6.6,11.8 L7.8,8z" fill="#f0f0f0"/><circle cx="6.6" cy="4.6" r="3.4" fill="#f8c020"/><path d="M3.4,3.8 Q6.6,0 9.8,3.8" fill="none" stroke="#d08a00" stroke-width="1"/></svg>
<svg class="a" style="left:116.5px;top:411.8px" width="13" height="13"><defs><linearGradient id="fg" x1="0" y1="0" x2="0" y2="1"><stop offset="0" stop-color="#f8e070"/><stop offset="1" stop-color="#f0c830"/></linearGradient></defs><rect x="0.6" y="0.6" width="11.6" height="11.6" rx="2.2" fill="url(#fg)" stroke="#c8a030" stroke-width="0.9"/><path d="M8.8,2.6 Q6.8,2.2 6.4,4.5 L5.6,8.5 Q5.2,10.2 3.6,9.8 M4.6,5.6 h3.6" fill="none" stroke="#8a6a18" stroke-width="1.1"/></svg>
<svg class="a" style="left:116px;top:428px" width="15" height="15"><ellipse cx="7" cy="6.2" rx="6.6" ry="2.6" fill="#48a8e0" stroke="#2a78b8" stroke-width="0.6"/><ellipse cx="7" cy="4.4" rx="3.4" ry="2.6" fill="#68c0f0" stroke="#2a78b8" stroke-width="0.5"/><ellipse cx="6" cy="3.6" rx="1.4" ry="0.9" fill="#c8ecff"/><path d="M3.8,8 Q6.5,12 9.8,8z" fill="#f0c838" stroke="#b09020" stroke-width="0.5"/><path d="M7.5,10.5 l3,-3 l3.5,3.5 l-3,3z" fill="#f0d050" stroke="#b09020" stroke-width="0.7"/></svg>
<svg class="a" style="left:134px;top:443px" width="15" height="15"><ellipse cx="7" cy="6.2" rx="6.6" ry="2.6" fill="#48a8e0" stroke="#2a78b8" stroke-width="0.6"/><ellipse cx="7" cy="4.4" rx="3.4" ry="2.6" fill="#68c0f0" stroke="#2a78b8" stroke-width="0.5"/><ellipse cx="6" cy="3.6" rx="1.4" ry="0.9" fill="#c8ecff"/><path d="M3.8,8 Q6.5,12 9.8,8z" fill="#f0c838" stroke="#b09020" stroke-width="0.5"/><path d="M7.5,10.5 l3,-3 l3.5,3.5 l-3,3z" fill="#a0a0a0" stroke="#606060" stroke-width="0.7"/></svg>
<svg class="a" style="left:134px;top:458.5px" width="15" height="15"><ellipse cx="7" cy="6.2" rx="6.6" ry="2.6" fill="#48a8e0" stroke="#2a78b8" stroke-width="0.6"/><ellipse cx="7" cy="4.4" rx="3.4" ry="2.6" fill="#68c0f0" stroke="#2a78b8" stroke-width="0.5"/><ellipse cx="6" cy="3.6" rx="1.4" ry="0.9" fill="#c8ecff"/><path d="M3.8,8 Q6.5,12 9.8,8z" fill="#f0c838" stroke="#b09020" stroke-width="0.5"/><path d="M7.5,10.5 l3,-3 l3.5,3.5 l-3,3z" fill="#f0d050" stroke="#b09020" stroke-width="0.7"/></svg>
<svg class="a" style="left:134px;top:474px" width="15" height="15"><ellipse cx="7" cy="6.2" rx="6.6" ry="2.6" fill="#48a8e0" stroke="#2a78b8" stroke-width="0.6"/><ellipse cx="7" cy="4.4" rx="3.4" ry="2.6" fill="#68c0f0" stroke="#2a78b8" stroke-width="0.5"/><ellipse cx="6" cy="3.6" rx="1.4" ry="0.9" fill="#c8ecff"/><path d="M3.8,8 Q6.5,12 9.8,8z" fill="#f0c838" stroke="#b09020" stroke-width="0.5"/><path d="M7.5,10.5 l3,-3 l3.5,3.5 l-3,3z" fill="#f0d050" stroke="#b09020" stroke-width="0.7"/></svg>
<svg class="a" style="left:116px;top:489px" width="15" height="14"><rect x="2" y="1" width="9" height="10" fill="#f0d870" stroke="#b09030" stroke-width="0.8"/><rect x="1" y="0.5" width="11" height="2" rx="1" fill="#e0c050"/><path d="M9,11 l2.5,-2.5 l2.5,2.5 l-2.5,2.5z" fill="#e8c040" stroke="#a08020" stroke-width="0.6"/></svg>
<div class="t" style="left:153.60px;top:353.20px;font-size:10.4px;color:#000;transform:scaleX(0.8454);transform-origin:0 0;">OIG-Demo</div>
<div class="t" style="left:171.80px;top:368.60px;font-size:10.4px;color:#000;transform:scaleX(0.8974);transform-origin:0 0;">2088725058: Kövess teszt</div>
<div class="t" style="left:153.60px;top:383.80px;font-size:10.4px;color:#000;transform:scaleX(0.8411);transform-origin:0 0;">OIG-Live</div>
<div class="t" style="left:171.80px;top:399.40px;font-size:10.4px;color:#000;transform:scaleX(0.8974);transform-origin:0 0;">2100036268: Kovess teszt</div>
<div class="t" style="left:135.60px;top:415.00px;font-size:10.4px;color:#000;transform:scaleX(1.0222);transform-origin:0 0;">Indikátorok</div>
<div class="t" style="left:135.60px;top:430.60px;font-size:10.4px;color:#000;transform:scaleX(0.9259);transform-origin:0 0;">Expertek</div>
<div class="t" style="left:154.20px;top:446.00px;font-size:10.4px;color:#000;transform:scaleX(0.8918);transform-origin:0 0;">Kovess_EA_Client_v2.1</div>
<div class="t" style="left:154.20px;top:461.50px;font-size:10.4px;color:#000;transform:scaleX(0.9597);transform-origin:0 0;">MACD Sample</div>
<div class="t" style="left:154.20px;top:476.90px;font-size:10.4px;color:#000;">Moving Average</div>
<div class="t" style="left:135.80px;top:492.40px;font-size:10.4px;color:#000;transform:scaleX(0.9470);transform-origin:0 0;">Szkriptek</div>
<div class="a" style="left:288px;top:349px;width:13px;height:165px;background:#f0f0f0;border-left:1px solid #e8e8e8"></div>
<div class="a" style="left:289.5px;top:385px;width:10.5px;height:113.5px;background:linear-gradient(90deg,#e8e8e8,#d4d4d4);border:1px solid #b0b0b0;border-radius:2px"></div>
<div class="a" style="left:292px;top:440px;width:6px;height:1px;background:#808080;"></div>
<div class="a" style="left:292px;top:442px;width:6px;height:1px;background:#808080;"></div>
<div class="a" style="left:292px;top:444px;width:6px;height:1px;background:#808080;"></div>
<svg class="a" style="left:290px;top:354px" width="9" height="6"><polygon points="1,5 8,5 4.5,1.5" fill="#505050"/></svg>
<svg class="a" style="left:290px;top:504px" width="9" height="6"><polygon points="1,1 8,1 4.5,4.5" fill="#505050"/></svg>
<div class="a" style="left:95px;top:514.7px;width:208px;height:1px;background:#202020;"></div>
<div class="a" style="left:95.5px;top:514.7px;width:60px;height:16.5px;background:#ffffff;border:1px solid #202020;border-top:none"></div>
<div class="t" style="left:105.20px;top:518.60px;font-size:10.4px;color:#000;transform:scaleX(0.9583);transform-origin:0 0;">Általános</div>
<div class="t" style="left:164.50px;top:518.60px;font-size:10.4px;color:#808080;transform:scaleX(0.9328);transform-origin:0 0;">Kedvencek</div>
<div class="a" style="left:221.7px;top:518px;width:1px;height:11px;background:#808080;"></div>
<div class="a" style="left:91px;top:535px;width:216px;height:1px;background:#d0d0d0;"></div>
<div class="a" style="left:307px;top:136px;width:881px;height:382px;background:#000;"></div>
<svg class="a" style="left:0;top:0" width="1281" height="704"><line x1="371.6" y1="139" x2="371.6" y2="500" stroke="#c8c8c8" stroke-width="1.2" stroke-dasharray="3,2"/><line x1="550.1" y1="139" x2="550.1" y2="500" stroke="#c8c8c8" stroke-width="1.2" stroke-dasharray="3,2"/><line x1="728.6" y1="139" x2="728.6" y2="500" stroke="#c8c8c8" stroke-width="1.2" stroke-dasharray="3,2"/><line x1="907.3" y1="139" x2="907.3" y2="500" stroke="#c8c8c8" stroke-width="1.2" stroke-dasharray="3,2"/><line x1="1071.9" y1="139" x2="1071.9" y2="500" stroke="#c8c8c8" stroke-width="1.2" stroke-dasharray="3,2"/></svg>
<div class="a" style="left:312px;top:202px;width:143px;height:122.6px;background:#0000ff;"></div>
<svg class="a" style="left:0;top:0" width="1281" height="704">
<defs><clipPath id="pc"><rect x="310" y="139" width="840" height="361"/></clipPath></defs>
<rect x="309.5" y="138.5" width="841" height="362" fill="none" stroke="#c8c8c8" stroke-width="1"/>
<line x1="1150.5" y1="158.0" x2="1153.5" y2="158.0" stroke="#c8c8c8" stroke-width="1"/>
<line x1="1150.5" y1="186.3" x2="1153.5" y2="186.3" stroke="#c8c8c8" stroke-width="1"/>
<line x1="1150.5" y1="214.7" x2="1153.5" y2="214.7" stroke="#c8c8c8" stroke-width="1"/>
<line x1="1150.5" y1="243.0" x2="1153.5" y2="243.0" stroke="#c8c8c8" stroke-width="1"/>
<line x1="1150.5" y1="271.3" x2="1153.5" y2="271.3" stroke="#c8c8c8" stroke-width="1"/>
<line x1="1150.5" y1="299.6" x2="1153.5" y2="299.6" stroke="#c8c8c8" stroke-width="1"/>
<line x1="1150.5" y1="328.0" x2="1153.5" y2="328.0" stroke="#c8c8c8" stroke-width="1"/>
<line x1="1150.5" y1="356.3" x2="1153.5" y2="356.3" stroke="#c8c8c8" stroke-width="1"/>
<line x1="1150.5" y1="384.6" x2="1153.5" y2="384.6" stroke="#c8c8c8" stroke-width="1"/>
<line x1="1150.5" y1="413.0" x2="1153.5" y2="413.0" stroke="#c8c8c8" stroke-width="1"/>
<line x1="1150.5" y1="441.3" x2="1153.5" y2="441.3" stroke="#c8c8c8" stroke-width="1"/>
<line x1="1150.5" y1="469.6" x2="1153.5" y2="469.6" stroke="#c8c8c8" stroke-width="1"/>
<line x1="1150.5" y1="498.0" x2="1153.5" y2="498.0" stroke="#c8c8c8" stroke-width="1"/>
<line x1="309.4" y1="500.5" x2="309.4" y2="503.5" stroke="#c8c8c8" stroke-width="1"/>
<line x1="364.4" y1="500.5" x2="364.4" y2="503.5" stroke="#c8c8c8" stroke-width="1"/>
<line x1="419.3" y1="500.5" x2="419.3" y2="503.5" stroke="#c8c8c8" stroke-width="1"/>
<line x1="474.3" y1="500.5" x2="474.3" y2="503.5" stroke="#c8c8c8" stroke-width="1"/>
<line x1="529.2" y1="500.5" x2="529.2" y2="503.5" stroke="#c8c8c8" stroke-width="1"/>
<line x1="584.2" y1="500.5" x2="584.2" y2="503.5" stroke="#c8c8c8" stroke-width="1"/>
<line x1="639.2" y1="500.5" x2="639.2" y2="503.5" stroke="#c8c8c8" stroke-width="1"/>
<line x1="694.1" y1="500.5" x2="694.1" y2="503.5" stroke="#c8c8c8" stroke-width="1"/>
<line x1="749.1" y1="500.5" x2="749.1" y2="503.5" stroke="#c8c8c8" stroke-width="1"/>
<line x1="804.0" y1="500.5" x2="804.0" y2="503.5" stroke="#c8c8c8" stroke-width="1"/>
<line x1="859.0" y1="500.5" x2="859.0" y2="503.5" stroke="#c8c8c8" stroke-width="1"/>
<line x1="914.0" y1="500.5" x2="914.0" y2="503.5" stroke="#c8c8c8" stroke-width="1"/>
<line x1="968.9" y1="500.5" x2="968.9" y2="503.5" stroke="#c8c8c8" stroke-width="1"/>
<line x1="1023.9" y1="500.5" x2="1023.9" y2="503.5" stroke="#c8c8c8" stroke-width="1"/>
<line x1="1078.8" y1="500.5" x2="1078.8" y2="503.5" stroke="#c8c8c8" stroke-width="1"/>
<line x1="1133.8" y1="500.5" x2="1133.8" y2="503.5" stroke="#c8c8c8" stroke-width="1"/>
<g clip-path="url(#pc)">
<line x1="310" y1="452.3" x2="1150" y2="452.3" stroke="#10a010" stroke-width="1.4" stroke-dasharray="7.8,4.7,2.7,5.1"/>
<polygon points="942.0,340.9 945.5,340.9 945.5,338.4 949.3,342.4 945.5,346.4 945.5,343.9 942.0,343.9" fill="#ff0000" stroke="#e8e8e8" stroke-width="1.2" stroke-linejoin="round"/>
<polygon points="941.3,369.5 944.8,369.5 944.8,367.0 948.6,371.0 944.8,375.0 944.8,372.5 941.3,372.5" fill="#10a010" stroke="#e8e8e8" stroke-width="1.2" stroke-linejoin="round"/>
<polygon points="1085.1,429.6 1088.6,429.6 1088.6,427.1 1092.4,431.1 1088.6,435.1 1088.6,432.6 1085.1,432.6" fill="#ff0000" stroke="#e8e8e8" stroke-width="1.2" stroke-linejoin="round"/>
<polygon points="1073.0,480.7 1076.5,480.7 1076.5,478.2 1080.3,482.2 1076.5,486.2 1076.5,483.7 1073.0,483.7" fill="#10a010" stroke="#e8e8e8" stroke-width="1.2" stroke-linejoin="round"/>
<polygon points="1121.0,450.7 1124.5,450.7 1124.5,448.2 1128.3,452.2 1124.5,456.2 1124.5,453.7 1121.0,453.7" fill="#10a010" stroke="#e8e8e8" stroke-width="1.2" stroke-linejoin="round"/>
<line x1="309.40" y1="160.0" x2="309.40" y2="190.0" stroke="#00ff00" stroke-width="1.1"/>
<rect x="307.65" y="165.0" width="3.5" height="20.0" fill="#000000" stroke="#00ff00" stroke-width="1"/>
<line x1="316.27" y1="156.0" x2="316.27" y2="180.0" stroke="#00ff00" stroke-width="1.1"/>
<rect x="314.52" y="160.0" width="3.5" height="15.0" fill="#ffffff" stroke="#00ff00" stroke-width="1"/>
<line x1="323.14" y1="160.0" x2="323.14" y2="186.0" stroke="#00ff00" stroke-width="1.1"/>
<rect x="321.39" y="165.0" width="3.5" height="15.0" fill="#000000" stroke="#00ff00" stroke-width="1"/>
<line x1="330.01" y1="165.0" x2="330.01" y2="190.0" stroke="#00ff00" stroke-width="1.1"/>
<rect x="328.26" y="170.0" width="3.5" height="15.0" fill="#ffffff" stroke="#00ff00" stroke-width="1"/>
<line x1="336.88" y1="190.0" x2="336.88" y2="213.8" stroke="#00ff00" stroke-width="1.1"/>
<rect x="335.13" y="195.0" width="3.5" height="15.7" fill="#ffffff" stroke="#00ff00" stroke-width="1"/>
<line x1="343.75" y1="206.7" x2="343.75" y2="214.8" stroke="#00ff00" stroke-width="1.1"/>
<rect x="342.00" y="207.7" width="3.5" height="6.1" fill="#000000" stroke="#00ff00" stroke-width="1"/>
<line x1="350.62" y1="204.6" x2="350.62" y2="221.9" stroke="#00ff00" stroke-width="1.1"/>
<rect x="348.87" y="208.7" width="3.5" height="2.5" fill="#ffffff" stroke="#00ff00" stroke-width="1"/>
<line x1="357.49" y1="200.0" x2="357.49" y2="230.5" stroke="#00ff00" stroke-width="1.1"/>
<rect x="355.74" y="210.7" width="3.5" height="13.2" fill="#ffffff" stroke="#00ff00" stroke-width="1"/>
<line x1="364.36" y1="218.4" x2="364.36" y2="233.6" stroke="#00ff00" stroke-width="1.1"/>
<rect x="362.61" y="221.9" width="3.5" height="2.0" fill="#ffffff" stroke="#00ff00" stroke-width="1"/>
<line x1="371.23" y1="205.2" x2="371.23" y2="231.5" stroke="#00ff00" stroke-width="1.1"/>
<rect x="369.48" y="208.2" width="3.5" height="14.2" fill="#000000" stroke="#00ff00" stroke-width="1"/>
<line x1="378.10" y1="198.0" x2="378.10" y2="223.9" stroke="#00ff00" stroke-width="1.1"/>
<rect x="376.35" y="208.2" width="3.5" height="15.7" fill="#ffffff" stroke="#00ff00" stroke-width="1"/>
<line x1="384.97" y1="220.0" x2="384.97" y2="223.0" stroke="#00ff00" stroke-width="1.1"/>
<line x1="382.67" y1="221.9" x2="387.27" y2="221.9" stroke="#00ff00" stroke-width="1.1"/>
<line x1="391.84" y1="213.3" x2="391.84" y2="227.5" stroke="#00ff00" stroke-width="1.1"/>
<rect x="390.09" y="221.4" width="3.5" height="2.0" fill="#ffffff" stroke="#00ff00" stroke-width="1"/>
<line x1="398.71" y1="185.0" x2="398.71" y2="227.5" stroke="#00ff00" stroke-width="1.1"/>
<rect x="396.96" y="190.0" width="3.5" height="33.4" fill="#000000" stroke="#00ff00" stroke-width="1"/>
<line x1="405.58" y1="175.0" x2="405.58" y2="199.0" stroke="#00ff00" stroke-width="1.1"/>
<rect x="403.83" y="180.0" width="3.5" height="15.0" fill="#000000" stroke="#00ff00" stroke-width="1"/>
<line x1="412.45" y1="172.0" x2="412.45" y2="197.0" stroke="#00ff00" stroke-width="1.1"/>
<rect x="410.70" y="178.0" width="3.5" height="14.0" fill="#ffffff" stroke="#00ff00" stroke-width="1"/>
<line x1="419.32" y1="180.0" x2="419.32" y2="208.2" stroke="#00ff00" stroke-width="1.1"/>
<rect x="417.57" y="185.0" width="3.5" height="15.0" fill="#ffffff" stroke="#00ff00" stroke-width="1"/>
<line x1="426.19" y1="175.0" x2="426.19" y2="199.0" stroke="#00ff00" stroke-width="1.1"/>
<rect x="424.44" y="180.0" width="3.5" height="15.0" fill="#000000" stroke="#00ff00" stroke-width="1"/>
<line x1="433.06" y1="185.0" x2="433.06" y2="204.6" stroke="#00ff00" stroke-width="1.1"/>
<rect x="431.31" y="188.0" width="3.5" height="10.0" fill="#ffffff" stroke="#00ff00" stroke-width="1"/>
<line x1="439.93" y1="182.0" x2="439.93" y2="206.7" stroke="#00ff00" stroke-width="1.1"/>
<rect x="438.18" y="186.0" width="3.5" height="14.0" fill="#000000" stroke="#00ff00" stroke-width="1"/>
<line x1="446.80" y1="186.0" x2="446.80" y2="203.6" stroke="#00ff00" stroke-width="1.1"/>
<rect x="445.05" y="190.0" width="3.5" height="10.0" fill="#ffffff" stroke="#00ff00" stroke-width="1"/>
<line x1="453.67" y1="185.0" x2="453.67" y2="201.0" stroke="#00ff00" stroke-width="1.1"/>
<rect x="451.92" y="188.0" width="3.5" height="11.0" fill="#000000" stroke="#00ff00" stroke-width="1"/>
<line x1="460.54" y1="190.0" x2="460.54" y2="223.1" stroke="#00ff00" stroke-width="1.1"/>
<rect x="458.79" y="195.0" width="3.5" height="28.1" fill="#ffffff" stroke="#00ff00" stroke-width="1"/>
<line x1="467.41" y1="221.2" x2="467.41" y2="223.5" stroke="#00ff00" stroke-width="1.1"/>
<rect x="465.66" y="221.2" width="3.5" height="2.3" fill="#000000" stroke="#00ff00" stroke-width="1"/>
<line x1="474.28" y1="208.1" x2="474.28" y2="224.3" stroke="#00ff00" stroke-width="1.1"/>
<rect x="472.53" y="215.0" width="3.5" height="6.8" fill="#000000" stroke="#00ff00" stroke-width="1"/>
<line x1="481.15" y1="203.0" x2="481.15" y2="225.0" stroke="#00ff00" stroke-width="1.1"/>
<rect x="479.40" y="215.0" width="3.5" height="8.1" fill="#ffffff" stroke="#00ff00" stroke-width="1"/>
<line x1="488.02" y1="208.1" x2="488.02" y2="234.0" stroke="#00ff00" stroke-width="1.1"/>
<rect x="486.27" y="210.9" width="3.5" height="12.2" fill="#000000" stroke="#00ff00" stroke-width="1"/>
<line x1="494.89" y1="188.3" x2="494.89" y2="212.8" stroke="#00ff00" stroke-width="1.1"/>
<rect x="493.14" y="205.2" width="3.5" height="6.4" fill="#000000" stroke="#00ff00" stroke-width="1"/>
<line x1="501.76" y1="194.0" x2="501.76" y2="209.9" stroke="#00ff00" stroke-width="1.1"/>
<rect x="500.01" y="200.4" width="3.5" height="4.8" fill="#000000" stroke="#00ff00" stroke-width="1"/>
<line x1="508.63" y1="193.4" x2="508.63" y2="200.0" stroke="#00ff00" stroke-width="1.1"/>
<rect x="506.88" y="195.3" width="3.5" height="4.4" fill="#000000" stroke="#00ff00" stroke-width="1"/>
<line x1="515.50" y1="181.5" x2="515.50" y2="200.7" stroke="#00ff00" stroke-width="1.1"/>
<rect x="513.75" y="191.1" width="3.5" height="4.5" fill="#000000" stroke="#00ff00" stroke-width="1"/>
<line x1="522.37" y1="187.3" x2="522.37" y2="211.6" stroke="#00ff00" stroke-width="1.1"/>
<rect x="520.62" y="191.5" width="3.5" height="11.1" fill="#ffffff" stroke="#00ff00" stroke-width="1"/>
<line x1="529.24" y1="195.0" x2="529.24" y2="214.0" stroke="#00ff00" stroke-width="1.1"/>
<rect x="527.49" y="199.7" width="3.5" height="2.9" fill="#ffffff" stroke="#00ff00" stroke-width="1"/>
<line x1="536.11" y1="191.1" x2="536.11" y2="209.0" stroke="#00ff00" stroke-width="1.1"/>
<line x1="533.81" y1="200.6" x2="538.41" y2="200.6" stroke="#00ff00" stroke-width="1.1"/>
<line x1="542.98" y1="191.1" x2="542.98" y2="223.7" stroke="#00ff00" stroke-width="1.1"/>
<line x1="540.68" y1="200.5" x2="545.28" y2="200.5" stroke="#00ff00" stroke-width="1.1"/>
<line x1="549.85" y1="193.0" x2="549.85" y2="198.8" stroke="#00ff00" stroke-width="1.1"/>
<line x1="547.55" y1="197.0" x2="552.15" y2="197.0" stroke="#00ff00" stroke-width="1.1"/>
<line x1="556.72" y1="193.5" x2="556.72" y2="206.0" stroke="#00ff00" stroke-width="1.1"/>
<rect x="554.97" y="196.1" width="3.5" height="9.4" fill="#ffffff" stroke="#00ff00" stroke-width="1"/>
<line x1="563.59" y1="194.3" x2="563.59" y2="228.8" stroke="#00ff00" stroke-width="1.1"/>
<line x1="561.29" y1="205.0" x2="565.89" y2="205.0" stroke="#00ff00" stroke-width="1.1"/>
<line x1="570.46" y1="196.1" x2="570.46" y2="211.7" stroke="#00ff00" stroke-width="1.1"/>
<line x1="568.16" y1="205.5" x2="572.76" y2="205.5" stroke="#00ff00" stroke-width="1.1"/>
<line x1="577.33" y1="204.0" x2="577.33" y2="232.7" stroke="#00ff00" stroke-width="1.1"/>
<rect x="575.58" y="205.7" width="3.5" height="20.8" fill="#ffffff" stroke="#00ff00" stroke-width="1"/>
<line x1="584.20" y1="205.5" x2="584.20" y2="239.5" stroke="#00ff00" stroke-width="1.1"/>
<rect x="582.45" y="209.1" width="3.5" height="17.4" fill="#000000" stroke="#00ff00" stroke-width="1"/>
<line x1="591.07" y1="207.7" x2="591.07" y2="214.8" stroke="#00ff00" stroke-width="1.1"/>
<line x1="588.77" y1="209.5" x2="593.37" y2="209.5" stroke="#00ff00" stroke-width="1.1"/>
<line x1="597.94" y1="207.2" x2="597.94" y2="231.0" stroke="#00ff00" stroke-width="1.1"/>
<rect x="596.19" y="209.1" width="3.5" height="18.5" fill="#ffffff" stroke="#00ff00" stroke-width="1"/>
<line x1="604.81" y1="227.3" x2="604.81" y2="257.6" stroke="#00ff00" stroke-width="1.1"/>
<rect x="603.06" y="227.3" width="3.5" height="27.0" fill="#ffffff" stroke="#00ff00" stroke-width="1"/>
<line x1="611.68" y1="253.0" x2="611.68" y2="272.3" stroke="#00ff00" stroke-width="1.1"/>
<rect x="609.93" y="254.7" width="3.5" height="15.5" fill="#ffffff" stroke="#00ff00" stroke-width="1"/>
<line x1="618.55" y1="253.0" x2="618.55" y2="279.1" stroke="#00ff00" stroke-width="1.1"/>
<rect x="616.80" y="257.3" width="3.5" height="13.3" fill="#000000" stroke="#00ff00" stroke-width="1"/>
<line x1="625.42" y1="254.3" x2="625.42" y2="283.6" stroke="#00ff00" stroke-width="1.1"/>
<rect x="623.67" y="258.1" width="3.5" height="25.3" fill="#ffffff" stroke="#00ff00" stroke-width="1"/>
<line x1="632.29" y1="281.9" x2="632.29" y2="285.0" stroke="#00ff00" stroke-width="1.1"/>
<line x1="629.99" y1="284.5" x2="634.59" y2="284.5" stroke="#00ff00" stroke-width="1.1"/>
<line x1="639.16" y1="268.9" x2="639.16" y2="286.1" stroke="#00ff00" stroke-width="1.1"/>
<rect x="637.41" y="270.2" width="3.5" height="14.8" fill="#000000" stroke="#00ff00" stroke-width="1"/>
<line x1="646.03" y1="264.9" x2="646.03" y2="283.6" stroke="#00ff00" stroke-width="1.1"/>
<rect x="644.28" y="270.2" width="3.5" height="12.3" fill="#ffffff" stroke="#00ff00" stroke-width="1"/>
<line x1="652.90" y1="271.7" x2="652.90" y2="288.8" stroke="#00ff00" stroke-width="1.1"/>
<line x1="650.60" y1="282.3" x2="655.20" y2="282.3" stroke="#00ff00" stroke-width="1.1"/>
<line x1="659.77" y1="260.3" x2="659.77" y2="301.8" stroke="#00ff00" stroke-width="1.1"/>
<rect x="658.02" y="282.3" width="3.5" height="14.7" fill="#ffffff" stroke="#00ff00" stroke-width="1"/>
<line x1="666.64" y1="296.7" x2="666.64" y2="320.4" stroke="#00ff00" stroke-width="1.1"/>
<rect x="664.89" y="296.7" width="3.5" height="18.0" fill="#ffffff" stroke="#00ff00" stroke-width="1"/>
<line x1="673.51" y1="311.0" x2="673.51" y2="315.2" stroke="#00ff00" stroke-width="1.1"/>
<line x1="671.21" y1="312.9" x2="675.81" y2="312.9" stroke="#00ff00" stroke-width="1.1"/>
<line x1="680.38" y1="306.0" x2="680.38" y2="320.2" stroke="#00ff00" stroke-width="1.1"/>
<rect x="678.63" y="313.4" width="3.5" height="2.2" fill="#ffffff" stroke="#00ff00" stroke-width="1"/>
<line x1="687.25" y1="303.8" x2="687.25" y2="323.0" stroke="#00ff00" stroke-width="1.1"/>
<rect x="685.50" y="311.4" width="3.5" height="4.2" fill="#000000" stroke="#00ff00" stroke-width="1"/>
<line x1="694.12" y1="290.3" x2="694.12" y2="315.2" stroke="#00ff00" stroke-width="1.1"/>
<rect x="692.37" y="303.1" width="3.5" height="8.3" fill="#000000" stroke="#00ff00" stroke-width="1"/>
<line x1="700.99" y1="291.8" x2="700.99" y2="312.4" stroke="#00ff00" stroke-width="1.1"/>
<rect x="699.24" y="303.1" width="3.5" height="5.0" fill="#ffffff" stroke="#00ff00" stroke-width="1"/>
<line x1="707.86" y1="275.9" x2="707.86" y2="308.8" stroke="#00ff00" stroke-width="1.1"/>
<rect x="706.11" y="278.3" width="3.5" height="29.8" fill="#000000" stroke="#00ff00" stroke-width="1"/>
<line x1="714.73" y1="277.3" x2="714.73" y2="282.5" stroke="#00ff00" stroke-width="1.1"/>
<line x1="712.43" y1="279.0" x2="717.03" y2="279.0" stroke="#00ff00" stroke-width="1.1"/>
<line x1="721.60" y1="279.7" x2="721.60" y2="295.3" stroke="#00ff00" stroke-width="1.1"/>
<rect x="719.85" y="279.7" width="3.5" height="3.5" fill="#ffffff" stroke="#00ff00" stroke-width="1"/>
<line x1="728.47" y1="250.3" x2="728.47" y2="286.8" stroke="#00ff00" stroke-width="1.1"/>
<rect x="726.72" y="255.2" width="3.5" height="28.1" fill="#000000" stroke="#00ff00" stroke-width="1"/>
<line x1="735.34" y1="233.1" x2="735.34" y2="257.9" stroke="#00ff00" stroke-width="1.1"/>
<rect x="733.59" y="242.6" width="3.5" height="12.0" fill="#000000" stroke="#00ff00" stroke-width="1"/>
<line x1="742.21" y1="232.3" x2="742.21" y2="254.5" stroke="#00ff00" stroke-width="1.1"/>
<line x1="739.91" y1="241.7" x2="744.51" y2="241.7" stroke="#00ff00" stroke-width="1.1"/>
<line x1="749.08" y1="227.7" x2="749.08" y2="247.6" stroke="#00ff00" stroke-width="1.1"/>
<rect x="747.33" y="227.7" width="3.5" height="13.6" fill="#000000" stroke="#00ff00" stroke-width="1"/>
<line x1="755.95" y1="240.0" x2="755.95" y2="255.7" stroke="#00ff00" stroke-width="1.1"/>
<rect x="754.20" y="242.5" width="3.5" height="13.2" fill="#000000" stroke="#00ff00" stroke-width="1"/>
<line x1="762.82" y1="237.4" x2="762.82" y2="264.7" stroke="#00ff00" stroke-width="1.1"/>
<rect x="761.07" y="242.5" width="3.5" height="15.4" fill="#ffffff" stroke="#00ff00" stroke-width="1"/>
<line x1="769.69" y1="251.1" x2="769.69" y2="272.4" stroke="#00ff00" stroke-width="1.1"/>
<rect x="767.94" y="257.4" width="3.5" height="10.2" fill="#ffffff" stroke="#00ff00" stroke-width="1"/>
<line x1="776.56" y1="174.8" x2="776.56" y2="304.3" stroke="#00ff00" stroke-width="1.1"/>
<rect x="774.81" y="267.8" width="3.5" height="32.7" fill="#ffffff" stroke="#00ff00" stroke-width="1"/>
<line x1="783.43" y1="289.1" x2="783.43" y2="318.6" stroke="#00ff00" stroke-width="1.1"/>
<rect x="781.68" y="300.5" width="3.5" height="10.0" fill="#ffffff" stroke="#00ff00" stroke-width="1"/>
<line x1="790.30" y1="299.0" x2="790.30" y2="329.3" stroke="#00ff00" stroke-width="1.1"/>
<rect x="788.55" y="310.5" width="3.5" height="13.8" fill="#ffffff" stroke="#00ff00" stroke-width="1"/>
<line x1="797.17" y1="325.9" x2="797.17" y2="333.9" stroke="#00ff00" stroke-width="1.1"/>
<rect x="795.42" y="328.6" width="3.5" height="3.7" fill="#ffffff" stroke="#00ff00" stroke-width="1"/>
<line x1="804.04" y1="331.8" x2="804.04" y2="370.2" stroke="#00ff00" stroke-width="1.1"/>
<rect x="802.29" y="331.8" width="3.5" height="25.9" fill="#ffffff" stroke="#00ff00" stroke-width="1"/>
<line x1="810.91" y1="333.9" x2="810.91" y2="368.0" stroke="#00ff00" stroke-width="1.1"/>
<rect x="809.16" y="357.7" width="3.5" height="6.8" fill="#ffffff" stroke="#00ff00" stroke-width="1"/>
<line x1="817.78" y1="352.0" x2="817.78" y2="383.9" stroke="#00ff00" stroke-width="1.1"/>
<rect x="816.03" y="364.5" width="3.5" height="6.2" fill="#ffffff" stroke="#00ff00" stroke-width="1"/>
<line x1="824.65" y1="357.3" x2="824.65" y2="398.2" stroke="#00ff00" stroke-width="1.1"/>
<rect x="822.90" y="370.7" width="3.5" height="27.5" fill="#ffffff" stroke="#00ff00" stroke-width="1"/>
<line x1="831.52" y1="391.4" x2="831.52" y2="416.4" stroke="#00ff00" stroke-width="1.1"/>
<rect x="829.77" y="398.0" width="3.5" height="10.4" fill="#ffffff" stroke="#00ff00" stroke-width="1"/>
<line x1="838.39" y1="407.0" x2="838.39" y2="412.6" stroke="#00ff00" stroke-width="1.1"/>
<rect x="836.64" y="408.3" width="3.5" height="2.6" fill="#ffffff" stroke="#00ff00" stroke-width="1"/>
<line x1="845.26" y1="388.9" x2="845.26" y2="411.3" stroke="#00ff00" stroke-width="1.1"/>
<rect x="843.51" y="392.6" width="3.5" height="18.7" fill="#000000" stroke="#00ff00" stroke-width="1"/>
<line x1="852.13" y1="386.2" x2="852.13" y2="411.3" stroke="#00ff00" stroke-width="1.1"/>
<rect x="850.38" y="392.8" width="3.5" height="1.9" fill="#ffffff" stroke="#00ff00" stroke-width="1"/>
<line x1="859.00" y1="390.9" x2="859.00" y2="430.1" stroke="#00ff00" stroke-width="1.1"/>
<rect x="857.25" y="394.3" width="3.5" height="30.4" fill="#ffffff" stroke="#00ff00" stroke-width="1"/>
<line x1="865.87" y1="409.9" x2="865.87" y2="432.7" stroke="#00ff00" stroke-width="1.1"/>
<rect x="864.12" y="418.3" width="3.5" height="6.5" fill="#000000" stroke="#00ff00" stroke-width="1"/>
<line x1="872.74" y1="396.0" x2="872.74" y2="425.6" stroke="#00ff00" stroke-width="1.1"/>
<rect x="870.99" y="407.1" width="3.5" height="11.7" fill="#000000" stroke="#00ff00" stroke-width="1"/>
<line x1="879.61" y1="402.3" x2="879.61" y2="411.4" stroke="#00ff00" stroke-width="1.1"/>
<rect x="877.86" y="402.3" width="3.5" height="2.4" fill="#000000" stroke="#00ff00" stroke-width="1"/>
<line x1="886.48" y1="377.2" x2="886.48" y2="418.1" stroke="#00ff00" stroke-width="1.1"/>
<rect x="884.73" y="399.4" width="3.5" height="4.2" fill="#000000" stroke="#00ff00" stroke-width="1"/>
<line x1="893.35" y1="387.0" x2="893.35" y2="417.3" stroke="#00ff00" stroke-width="1.1"/>
<rect x="891.60" y="390.3" width="3.5" height="9.5" fill="#000000" stroke="#00ff00" stroke-width="1"/>
<line x1="900.22" y1="382.9" x2="900.22" y2="421.7" stroke="#00ff00" stroke-width="1.1"/>
<rect x="898.47" y="390.5" width="3.5" height="18.8" fill="#ffffff" stroke="#00ff00" stroke-width="1"/>
<line x1="907.09" y1="382.2" x2="907.09" y2="411.7" stroke="#00ff00" stroke-width="1.1"/>
<rect x="905.34" y="385.1" width="3.5" height="24.6" fill="#000000" stroke="#00ff00" stroke-width="1"/>
<line x1="913.96" y1="375.5" x2="913.96" y2="397.3" stroke="#00ff00" stroke-width="1.1"/>
<line x1="911.66" y1="384.9" x2="916.26" y2="384.9" stroke="#00ff00" stroke-width="1.1"/>
<line x1="920.83" y1="404.8" x2="920.83" y2="436.6" stroke="#00ff00" stroke-width="1.1"/>
<rect x="919.08" y="406.3" width="3.5" height="9.6" fill="#ffffff" stroke="#00ff00" stroke-width="1"/>
<line x1="927.70" y1="340.1" x2="927.70" y2="426.7" stroke="#00ff00" stroke-width="1.1"/>
<rect x="925.95" y="354.3" width="3.5" height="61.9" fill="#000000" stroke="#00ff00" stroke-width="1"/>
<line x1="934.57" y1="343.8" x2="934.57" y2="373.8" stroke="#00ff00" stroke-width="1.1"/>
<rect x="932.82" y="354.3" width="3.5" height="11.8" fill="#ffffff" stroke="#00ff00" stroke-width="1"/>
<line x1="941.44" y1="349.6" x2="941.44" y2="369.4" stroke="#00ff00" stroke-width="1.1"/>
<rect x="939.69" y="353.3" width="3.5" height="14.7" fill="#000000" stroke="#00ff00" stroke-width="1"/>
<line x1="948.31" y1="315.1" x2="948.31" y2="406.7" stroke="#00ff00" stroke-width="1.1"/>
<rect x="946.56" y="353.3" width="3.5" height="45.5" fill="#ffffff" stroke="#00ff00" stroke-width="1"/>
<line x1="955.18" y1="395.3" x2="955.18" y2="428.6" stroke="#00ff00" stroke-width="1.1"/>
<rect x="953.43" y="398.8" width="3.5" height="20.9" fill="#ffffff" stroke="#00ff00" stroke-width="1"/>
<line x1="962.05" y1="422.2" x2="962.05" y2="426.2" stroke="#00ff00" stroke-width="1.1"/>
<rect x="960.30" y="422.2" width="3.5" height="4.0" fill="#000000" stroke="#00ff00" stroke-width="1"/>
<line x1="968.92" y1="388.0" x2="968.92" y2="429.7" stroke="#00ff00" stroke-width="1.1"/>
<rect x="967.17" y="392.1" width="3.5" height="31.6" fill="#000000" stroke="#00ff00" stroke-width="1"/>
<line x1="975.79" y1="383.0" x2="975.79" y2="404.4" stroke="#00ff00" stroke-width="1.1"/>
<rect x="974.04" y="391.9" width="3.5" height="4.5" fill="#ffffff" stroke="#00ff00" stroke-width="1"/>
<line x1="982.66" y1="382.0" x2="982.66" y2="440.5" stroke="#00ff00" stroke-width="1.1"/>
<rect x="980.91" y="396.1" width="3.5" height="38.1" fill="#ffffff" stroke="#00ff00" stroke-width="1"/>
<line x1="989.53" y1="429.9" x2="989.53" y2="482.6" stroke="#00ff00" stroke-width="1.1"/>
<rect x="987.78" y="434.9" width="3.5" height="31.0" fill="#ffffff" stroke="#00ff00" stroke-width="1"/>
<line x1="996.40" y1="446.3" x2="996.40" y2="471.2" stroke="#00ff00" stroke-width="1.1"/>
<rect x="994.65" y="457.3" width="3.5" height="8.6" fill="#000000" stroke="#00ff00" stroke-width="1"/>
<line x1="1003.27" y1="451.8" x2="1003.27" y2="459.3" stroke="#00ff00" stroke-width="1.1"/>
<rect x="1001.52" y="456.6" width="3.5" height="2.7" fill="#000000" stroke="#00ff00" stroke-width="1"/>
<line x1="1010.14" y1="444.9" x2="1010.14" y2="473.7" stroke="#00ff00" stroke-width="1.1"/>
<rect x="1008.39" y="456.3" width="3.5" height="14.9" fill="#ffffff" stroke="#00ff00" stroke-width="1"/>
<line x1="1017.01" y1="465.2" x2="1017.01" y2="488.1" stroke="#00ff00" stroke-width="1.1"/>
<rect x="1015.26" y="471.2" width="3.5" height="3.3" fill="#ffffff" stroke="#00ff00" stroke-width="1"/>
<line x1="1023.88" y1="454.3" x2="1023.88" y2="477.2" stroke="#00ff00" stroke-width="1.1"/>
<rect x="1022.13" y="462.2" width="3.5" height="12.5" fill="#000000" stroke="#00ff00" stroke-width="1"/>
<line x1="1030.75" y1="437.9" x2="1030.75" y2="463.5" stroke="#00ff00" stroke-width="1.1"/>
<rect x="1029.00" y="458.8" width="3.5" height="4.7" fill="#000000" stroke="#00ff00" stroke-width="1"/>
<line x1="1037.62" y1="448.3" x2="1037.62" y2="462.7" stroke="#00ff00" stroke-width="1.1"/>
<rect x="1035.87" y="455.3" width="3.5" height="4.0" fill="#000000" stroke="#00ff00" stroke-width="1"/>
<line x1="1044.49" y1="450.0" x2="1044.49" y2="460.9" stroke="#00ff00" stroke-width="1.1"/>
<rect x="1042.74" y="451.3" width="3.5" height="2.4" fill="#000000" stroke="#00ff00" stroke-width="1"/>
<line x1="1051.36" y1="444.7" x2="1051.36" y2="480.5" stroke="#00ff00" stroke-width="1.1"/>
<rect x="1049.61" y="451.6" width="3.5" height="14.9" fill="#ffffff" stroke="#00ff00" stroke-width="1"/>
<line x1="1058.23" y1="388.2" x2="1058.23" y2="466.5" stroke="#00ff00" stroke-width="1.1"/>
<rect x="1056.48" y="416.6" width="3.5" height="49.9" fill="#000000" stroke="#00ff00" stroke-width="1"/>
<line x1="1065.10" y1="408.1" x2="1065.10" y2="436.2" stroke="#00ff00" stroke-width="1.1"/>
<rect x="1063.35" y="416.6" width="3.5" height="13.7" fill="#ffffff" stroke="#00ff00" stroke-width="1"/>
<line x1="1071.97" y1="430.0" x2="1071.97" y2="458.4" stroke="#00ff00" stroke-width="1.1"/>
<rect x="1070.22" y="433.2" width="3.5" height="19.7" fill="#ffffff" stroke="#00ff00" stroke-width="1"/>
<line x1="1078.84" y1="441.3" x2="1078.84" y2="491.6" stroke="#00ff00" stroke-width="1.1"/>
<rect x="1077.09" y="452.9" width="3.5" height="12.3" fill="#ffffff" stroke="#00ff00" stroke-width="1"/>
<line x1="1085.71" y1="437.9" x2="1085.71" y2="474.5" stroke="#00ff00" stroke-width="1.1"/>
<rect x="1083.96" y="439.3" width="3.5" height="25.9" fill="#000000" stroke="#00ff00" stroke-width="1"/>
<line x1="1092.58" y1="400.1" x2="1092.58" y2="444.7" stroke="#00ff00" stroke-width="1.1"/>
<rect x="1090.83" y="404.2" width="3.5" height="35.1" fill="#000000" stroke="#00ff00" stroke-width="1"/>
<line x1="1099.45" y1="398.5" x2="1099.45" y2="430.7" stroke="#00ff00" stroke-width="1.1"/>
<rect x="1097.70" y="404.2" width="3.5" height="22.9" fill="#ffffff" stroke="#00ff00" stroke-width="1"/>
<line x1="1106.32" y1="426.2" x2="1106.32" y2="430.2" stroke="#00ff00" stroke-width="1.1"/>
<line x1="1104.02" y1="428.5" x2="1108.62" y2="428.5" stroke="#00ff00" stroke-width="1.1"/>
<line x1="1113.19" y1="409.3" x2="1113.19" y2="435.1" stroke="#00ff00" stroke-width="1.1"/>
<rect x="1111.44" y="409.5" width="3.5" height="19.8" fill="#000000" stroke="#00ff00" stroke-width="1"/>
<line x1="1120.06" y1="396.1" x2="1120.06" y2="421.0" stroke="#00ff00" stroke-width="1.1"/>
<rect x="1118.31" y="410.2" width="3.5" height="10.8" fill="#ffffff" stroke="#00ff00" stroke-width="1"/>
<line x1="1126.93" y1="398.0" x2="1126.93" y2="452.4" stroke="#00ff00" stroke-width="1.1"/>
<rect x="1125.18" y="407.6" width="3.5" height="13.7" fill="#000000" stroke="#00ff00" stroke-width="1"/>
<line x1="1133.80" y1="389.1" x2="1133.80" y2="415.7" stroke="#00ff00" stroke-width="1.1"/>
<rect x="1132.05" y="390.3" width="3.5" height="17.3" fill="#000000" stroke="#00ff00" stroke-width="1"/>
<line x1="310" y1="390.5" x2="1150" y2="390.5" stroke="#8a96a4" stroke-width="1"/>
</g>
</svg>
<div class="t" style="left:1155.50px;top:153.75px;font-size:8.8px;color:#e8e8e8;transform:scaleX(0.9054);transform-origin:0 0;">1.13515</div>
<div class="t" style="left:1155.50px;top:182.08px;font-size:8.8px;color:#e8e8e8;transform:scaleX(0.9054);transform-origin:0 0;">1.12640</div>
<div class="t" style="left:1155.50px;top:210.41px;font-size:8.8px;color:#e8e8e8;transform:scaleX(0.9244);transform-origin:0 0;">1.11790</div>
<div class="t" style="left:1155.50px;top:238.74px;font-size:8.8px;color:#e8e8e8;transform:scaleX(0.9054);transform-origin:0 0;">1.10940</div>
<div class="t" style="left:1155.50px;top:267.07px;font-size:8.8px;color:#e8e8e8;transform:scaleX(0.9054);transform-origin:0 0;">1.10065</div>
<div class="t" style="left:1155.50px;top:295.40px;font-size:8.8px;color:#e8e8e8;transform:scaleX(0.9054);transform-origin:0 0;">1.09215</div>
<div class="t" style="left:1155.50px;top:323.73px;font-size:8.8px;color:#e8e8e8;transform:scaleX(0.9054);transform-origin:0 0;">1.08365</div>
<div class="t" style="left:1155.50px;top:352.06px;font-size:8.8px;color:#e8e8e8;transform:scaleX(0.9054);transform-origin:0 0;">1.07490</div>
<div class="t" style="left:1155.50px;top:380.39px;font-size:8.8px;color:#e8e8e8;transform:scaleX(0.9054);transform-origin:0 0;">1.06640</div>
<div class="t" style="left:1155.50px;top:408.72px;font-size:8.8px;color:#e8e8e8;transform:scaleX(0.9054);transform-origin:0 0;">1.05790</div>
<div class="t" style="left:1155.50px;top:437.05px;font-size:8.8px;color:#e8e8e8;transform:scaleX(0.9054);transform-origin:0 0;">1.04915</div>
<div class="t" style="left:1155.50px;top:465.38px;font-size:8.8px;color:#e8e8e8;transform:scaleX(0.9054);transform-origin:0 0;">1.04065</div>
<div class="t" style="left:1155.50px;top:493.71px;font-size:8.8px;color:#e8e8e8;transform:scaleX(0.9054);transform-origin:0 0;">1.03215</div>
<div class="a" style="left:1151px;top:384px;width:36px;height:12px;background:#fff;"></div>
<div class="t" style="left:1155.00px;top:386.22px;font-size:8.6px;color:#000;">1.06463</div>
<div class="t" style="left:309.40px;top:503.95px;font-size:8.8px;color:#e8e8e8;transform:scaleX(0.9100);transform-origin:0 0;">22 Aug 2016</div>
<div class="t" style="left:364.36px;top:503.95px;font-size:8.8px;color:#e8e8e8;transform:scaleX(0.9100);transform-origin:0 0;">31 Aug 2016</div>
<div class="t" style="left:419.32px;top:503.95px;font-size:8.8px;color:#e8e8e8;transform:scaleX(0.9100);transform-origin:0 0;">9 Sep 2016</div>
<div class="t" style="left:474.28px;top:503.95px;font-size:8.8px;color:#e8e8e8;transform:scaleX(0.9100);transform-origin:0 0;">19 Sep 2016</div>
<div class="t" style="left:529.24px;top:503.95px;font-size:8.8px;color:#e8e8e8;transform:scaleX(0.9100);transform-origin:0 0;">28 Sep 2016</div>
<div class="t" style="left:584.20px;top:503.95px;font-size:8.8px;color:#e8e8e8;transform:scaleX(0.9100);transform-origin:0 0;">7 Oct 2016</div>
<div class="t" style="left:639.16px;top:503.95px;font-size:8.8px;color:#e8e8e8;transform:scaleX(0.9100);transform-origin:0 0;">17 Oct 2016</div>
<div class="t" style="left:694.12px;top:503.95px;font-size:8.8px;color:#e8e8e8;transform:scaleX(0.9100);transform-origin:0 0;">26 Oct 2016</div>
<div class="t" style="left:749.08px;top:503.95px;font-size:8.8px;color:#e8e8e8;transform:scaleX(0.9100);transform-origin:0 0;">4 Nov 2016</div>
<div class="t" style="left:804.04px;top:503.95px;font-size:8.8px;color:#e8e8e8;transform:scaleX(0.9100);transform-origin:0 0;">14 Nov 2016</div>
<div class="t" style="left:859.00px;top:503.95px;font-size:8.8px;color:#e8e8e8;transform:scaleX(0.9100);transform-origin:0 0;">23 Nov 2016</div>
<div class="t" style="left:913.96px;top:503.95px;font-size:8.8px;color:#e8e8e8;transform:scaleX(0.9100);transform-origin:0 0;">2 Dec 2016</div>
<div class="t" style="left:968.92px;top:503.95px;font-size:8.8px;color:#e8e8e8;transform:scaleX(0.9100);transform-origin:0 0;">12 Dec 2016</div>
<div class="t" style="left:1023.88px;top:503.95px;font-size:8.8px;color:#e8e8e8;transform:scaleX(0.9100);transform-origin:0 0;">21 Dec 2016</div>
<div class="t" style="left:1078.84px;top:503.95px;font-size:8.8px;color:#e8e8e8;transform:scaleX(0.9100);transform-origin:0 0;">3 Jan 2017</div>
<div class="t" style="left:1133.80px;top:503.95px;font-size:8.8px;color:#e8e8e8;transform:scaleX(0.9100);transform-origin:0 0;">12 Jan 2017</div>
<div class="a" style="left:311px;top:140.5px;width:194px;height:12.5px;background:#000;"></div>
<div class="a" style="left:312px;top:147.3px;width:143.3px;height:4px;background:#2f4f4f;"></div>
<svg class="a" style="left:311px;top:142px" width="7" height="6"><polygon points="0.5,5.5 3.5,1 6.5,5.5" fill="#fff"/></svg>
<div class="t" style="left:322.60px;top:140.89px;font-size:8.4px;color:#e8e8e8;transform:scaleX(0.9703);transform-origin:0 0;">EURUSD,Daily</div>
<div class="t" style="left:382.30px;top:140.89px;font-size:8.4px;color:#e8e8e8;transform:scaleX(0.9617);transform-origin:0 0;">1.05937</div>
<div class="t" style="left:413.80px;top:140.89px;font-size:8.4px;color:#e8e8e8;transform:scaleX(0.9617);transform-origin:0 0;">1.06493</div>
<div class="t" style="left:444.20px;top:140.89px;font-size:8.4px;color:#e8e8e8;transform:scaleX(0.9818);transform-origin:0 0;">1.05711</div>
<div class="t" style="left:474.90px;top:140.89px;font-size:8.4px;color:#e8e8e8;transform:scaleX(0.9353);transform-origin:0 0;">1.06463</div>
<div class="a" style="left:312px;top:153px;width:163px;height:48.3px;background:#000;"></div>
<div class="a" style="left:312px;top:153.3px;width:39px;height:18.5px;background:linear-gradient(#f05050,#d82828);"></div>
<div class="t" style="left:320.60px;top:156.59px;font-size:11px;color:#fff;transform:scaleX(0.7544);transform-origin:0 0;">SELL</div>
<div class="a" style="left:316px;top:171.2px;width:32px;height:1px;background:#ff9090;"></div>
<div class="a" style="left:438.7px;top:153.3px;width:36px;height:18.5px;background:linear-gradient(#f05050,#d82828);"></div>
<div class="t" style="left:448.00px;top:156.59px;font-size:11px;color:#fff;transform:scaleX(0.8224);transform-origin:0 0;">BUY</div>
<div class="a" style="left:442px;top:171.2px;width:31px;height:1px;background:#ff9090;"></div>
<div class="a" style="left:353px;top:153px;width:84px;height:17.2px;background:#202020;"></div>
<div class="a" style="left:354px;top:154px;width:16px;height:15.2px;background:linear-gradient(#e8e8e8,#c8c8c8);"></div>
<div class="a" style="left:371px;top:154px;width:48px;height:15.2px;background:#fff;"></div>
<div class="a" style="left:420px;top:154px;width:16px;height:15.2px;background:linear-gradient(#e8e8e8,#c8c8c8);"></div>
<svg class="a" style="left:357px;top:159px" width="10" height="6"><polygon points="2.4,1 7.2,1 4.8,3.6" fill="#5a78c8"/></svg>
<svg class="a" style="left:422.5px;top:159.5px" width="10" height="6"><polygon points="2.2,3.8 7.4,3.8 4.8,1.2" fill="#6a88d0"/></svg>
<div class="t" style="left:396.50px;top:155.69px;font-size:11px;color:#000;transform:scaleX(0.8875);transform-origin:0 0;">1.18</div>
<div class="a" style="left:312px;top:172px;width:83px;height:29px;background:linear-gradient(#e02828,#b00808);"></div>
<div class="a" style="left:396.3px;top:172px;width:78.2px;height:29px;background:linear-gradient(#e02828,#b00808);"></div>
<div class="t" style="left:324.60px;top:186.39px;font-size:11px;color:#fff;font-weight:bold;transform:scaleX(0.9809);transform-origin:0 0;">1.06</div>
<div class="t" style="left:348.50px;top:174.54px;font-size:25px;color:#fff;transform:scaleX(1.0069);transform-origin:0 0;">45</div>
<div class="t" style="left:380.30px;top:174.96px;font-size:9.5px;color:#fff;font-weight:bold;transform:scaleX(1.1356);transform-origin:0 0;">8</div>
<div class="t" style="left:408.90px;top:186.39px;font-size:11px;color:#fff;font-weight:bold;transform:scaleX(0.9809);transform-origin:0 0;">1.06</div>
<div class="t" style="left:432.00px;top:174.54px;font-size:25px;color:#fff;transform:scaleX(0.9530);transform-origin:0 0;">47</div>
<div class="t" style="left:463.30px;top:174.96px;font-size:9.5px;color:#fff;font-weight:bold;transform:scaleX(1.1356);transform-origin:0 0;">6</div>
<div class="t" style="left:313.5px;top:244.9px;font-size:8.4px;color:#fff;white-space:pre;-webkit-text-stroke:0;transform:scaleX(0.98);transform-origin:0 0">Status   :  Account number OK</div>
<div class="t" style="left:313.5px;top:255.2px;font-size:8.4px;color:#fff;white-space:pre;-webkit-text-stroke:0;transform:scaleX(0.98);transform-origin:0 0">Leverage  :  1 : 500</div>
<div class="t" style="left:313.5px;top:265.5px;font-size:8.4px;color:#fff;white-space:pre;-webkit-text-stroke:0;transform:scaleX(0.98);transform-origin:0 0">Account Type  :  OIG-Live</div>
<div class="t" style="left:313.5px;top:275.8px;font-size:8.4px;color:#fff;white-space:pre;-webkit-text-stroke:0;transform:scaleX(0.98);transform-origin:0 0">Server Time  :  08:36:14</div>
<div class="t" style="left:313.5px;top:286.1px;font-size:8.4px;color:#fff;white-space:pre;-webkit-text-stroke:0;transform:scaleX(0.98);transform-origin:0 0">Account Equity  = 22143.52</div>
<div class="t" style="left:313.5px;top:296.4px;font-size:8.4px;color:#fff;white-space:pre;-webkit-text-stroke:0;transform:scaleX(0.98);transform-origin:0 0">Free Margin     = 21771.1867</div>
<div class="t" style="left:313.50px;top:326.69px;font-size:8.4px;color:#e8e8e8;transform:scaleX(0.9330);transform-origin:0 0;">Trade parameters</div>
<div class="a" style="left:313px;top:341.5px;width:134px;height:1px;background:repeating-linear-gradient(90deg,#d0d0d0 0 2px,transparent 2px 3px);"></div>
<div class="t" style="left:313.50px;top:347.29px;font-size:8.4px;color:#e8e8e8;">Risk</div>
<div class="t" style="left:364.60px;top:347.29px;font-size:8.4px;color:#e8e8e8;">:</div>
<div class="t" style="left:371.80px;top:347.29px;font-size:8.4px;color:#e8e8e8;">10%</div>
<div class="t" style="left:313.50px;top:357.19px;font-size:8.4px;color:#e8e8e8;">Calculated lots</div>
<div class="t" style="left:372.00px;top:357.19px;font-size:8.4px;color:#e8e8e8;">:</div>
<div class="t" style="left:380.50px;top:357.19px;font-size:8.4px;color:#e8e8e8;">1.89</div>
<div class="a" style="left:313px;top:372.5px;width:134px;height:1px;background:repeating-linear-gradient(90deg,#d0d0d0 0 2px,transparent 2px 3px);"></div>
<div class="t" style="left:315.40px;top:442.39px;font-size:8.4px;color:#e0e0e0;transform:scaleX(0.9686);transform-origin:0 0;">#40714544 buy 1.78</div>
<div class="t" style="left:1048.50px;top:142.69px;font-size:8.4px;color:#e8e8e8;transform:scaleX(0.9654);transform-origin:0 0;">Kovess_EA_Client_v2.1</div>
<svg class="a" style="left:1134.6px;top:140.6px" width="14" height="14"><circle cx="6.5" cy="6.5" r="5" fill="none" stroke="#e8e8e8" stroke-width="1.1"/><circle cx="4.8" cy="5.2" r="0.7" fill="#e8e8e8"/><circle cx="8.2" cy="5.2" r="0.7" fill="#e8e8e8"/><path d="M4,7.5 Q6.5,10 9,7.5" fill="none" stroke="#e8e8e8" stroke-width="1"/></svg>
<div class="a" style="left:307px;top:518px;width:882px;height:18px;background:#f0f0f0;"></div>
<div class="a" style="left:307px;top:518.6px;width:882px;height:1.6px;background:#8a8a8a;"></div>
<div class="a" style="left:311px;top:519px;width:82px;height:16.5px;background:#ffffff;border:1px solid #202020;border-top:none"></div>
<div class="t" style="left:321.10px;top:524.10px;font-size:10.4px;color:#000;transform:scaleX(0.8824);transform-origin:0 0;">EURUSD,Daily</div>
<div class="t" style="left:403.90px;top:524.10px;font-size:10.4px;color:#808080;transform:scaleX(0.8724);transform-origin:0 0;">EURUSD,Daily</div>
<div class="a" style="left:475.8px;top:522px;width:1px;height:11px;background:#808080;"></div>
<svg class="a" style="left:1160px;top:523px" width="6" height="8"><polygon points="5,1 5,7 1.5,4" fill="#a0a0a0"/></svg>
<svg class="a" style="left:1176px;top:523px" width="6" height="8"><polygon points="1,1 1,7 4.5,4" fill="#a0a0a0"/></svg>
<div class="a" style="left:306px;top:518px;width:1px;height:18px;background:#a0a0a0;"></div>
<div class="a" style="left:91px;top:536px;width:1098px;height:147px;background:#f0f0f0;"></div>
<div class="a" style="left:91px;top:536px;width:1098px;height:1px;background:#e0e0e0;"></div>
<div class="a" style="left:92px;top:551px;width:11px;height:130px;background:linear-gradient(#c8d8e8,#d4e2f0);"></div>
<svg class="a" style="left:93.5px;top:542px" width="7" height="7"><path d="M1,1 L6,6 M6,1 L1,6" stroke="#000" stroke-width="1.5"/></svg>
<div class="t" style="left:93px;top:679px;font-size:9.4px;color:#60707e;transform:rotate(-90deg) scaleX(0.92);transform-origin:0 0">Terminál</div>
<div class="a" style="left:104px;top:540.5px;width:1082px;height:122px;background:#ffffff;border-left:1px solid #a0a0a0;border-top:1px solid #a0a0a0"></div>
<div class="a" style="left:105px;top:541.5px;width:1081px;height:19px;background:linear-gradient(#ffffff,#f2f2f2);"></div>
<div class="a" style="left:105px;top:560px;width:1081px;height:1px;background:#e0e0e0;"></div>
<div class="a" style="left:210.8px;top:541.5px;width:1px;height:19px;background:#e4e4e4;"></div>
<div class="a" style="left:210.8px;top:561px;width:1px;height:17.5px;background:#e8e8e8;"></div>
<div class="a" style="left:359px;top:541.5px;width:1px;height:19px;background:#e4e4e4;"></div>
<div class="a" style="left:359px;top:561px;width:1px;height:17.5px;background:#e8e8e8;"></div>
<div class="a" style="left:432.7px;top:541.5px;width:1px;height:19px;background:#e4e4e4;"></div>
<div class="a" style="left:432.7px;top:561px;width:1px;height:17.5px;background:#e8e8e8;"></div>
<div class="a" style="left:490.8px;top:541.5px;width:1px;height:19px;background:#e4e4e4;"></div>
<div class="a" style="left:490.8px;top:561px;width:1px;height:17.5px;background:#e8e8e8;"></div>
<div class="a" style="left:563.7px;top:541.5px;width:1px;height:19px;background:#e4e4e4;"></div>
<div class="a" style="left:563.7px;top:561px;width:1px;height:17.5px;background:#e8e8e8;"></div>
<div class="a" style="left:647px;top:541.5px;width:1px;height:19px;background:#e4e4e4;"></div>
<div class="a" style="left:647px;top:561px;width:1px;height:17.5px;background:#e8e8e8;"></div>
<div class="a" style="left:729px;top:541.5px;width:1px;height:19px;background:#e4e4e4;"></div>
<div class="a" style="left:729px;top:561px;width:1px;height:17.5px;background:#e8e8e8;"></div>
<div class="a" style="left:811.5px;top:541.5px;width:1px;height:19px;background:#e4e4e4;"></div>
<div class="a" style="left:811.5px;top:561px;width:1px;height:17.5px;background:#e8e8e8;"></div>
<div class="a" style="left:893.5px;top:541.5px;width:1px;height:19px;background:#e4e4e4;"></div>
<div class="a" style="left:893.5px;top:561px;width:1px;height:17.5px;background:#e8e8e8;"></div>
<div class="a" style="left:976px;top:541.5px;width:1px;height:19px;background:#e4e4e4;"></div>
<div class="a" style="left:976px;top:561px;width:1px;height:17.5px;background:#e8e8e8;"></div>
<div class="a" style="left:1058px;top:541.5px;width:1px;height:19px;background:#e4e4e4;"></div>
<div class="a" style="left:1058px;top:561px;width:1px;height:17.5px;background:#e8e8e8;"></div>
<div class="t" style="left:109.90px;top:547.00px;font-size:10.4px;color:#000;transform:scaleX(0.9537);transform-origin:0 0;">Megbízás</div>
<div class="t" style="left:163.00px;top:548.13px;font-size:8px;color:#808080;">/</div>
<div class="t" style="left:320.00px;top:547.00px;font-size:10.4px;color:#000;transform:scaleX(1.0087);transform-origin:0 0;">Időpont</div>
<div class="t" style="left:404.20px;top:547.00px;font-size:10.4px;color:#000;transform:scaleX(0.9419);transform-origin:0 0;">Típus</div>
<div class="t" style="left:441.50px;top:547.00px;font-size:10.4px;color:#000;transform:scaleX(0.9609);transform-origin:0 0;">Kötéseg...</div>
<div class="t" style="left:496.20px;top:547.00px;font-size:10.4px;color:#000;">Instrumentu...</div>
<div class="t" style="left:631.90px;top:547.00px;font-size:10.4px;color:#000;transform:scaleX(1.0096);transform-origin:0 0;">Ár</div>
<div class="t" style="left:704.00px;top:547.00px;font-size:10.4px;color:#000;transform:scaleX(0.9351);transform-origin:0 0;">S / L</div>
<div class="t" style="left:786.50px;top:547.00px;font-size:10.4px;color:#000;transform:scaleX(0.9187);transform-origin:0 0;">T / P</div>
<div class="t" style="left:878.00px;top:547.00px;font-size:10.4px;color:#000;transform:scaleX(1.0096);transform-origin:0 0;">Ár</div>
<div class="t" style="left:939.50px;top:547.00px;font-size:10.4px;color:#000;transform:scaleX(0.9711);transform-origin:0 0;">Jutalék</div>
<div class="t" style="left:1026.00px;top:547.00px;font-size:10.4px;color:#000;transform:scaleX(0.9315);transform-origin:0 0;">Kamat</div>
<div class="t" style="left:1155.00px;top:547.00px;font-size:10.4px;color:#000;transform:scaleX(1.0299);transform-origin:0 0;">Profit</div>
<div class="a" style="left:105px;top:578px;width:1081px;height:1px;background:#f0f0f0;"></div>
<svg class="a" style="left:106px;top:563px" width="14" height="15"><path d="M1.5,0.5 h6.5 l3,3 v10 h-9.5z" fill="#fafafa" stroke="#707070"/><circle cx="10" cy="11" r="3" fill="#2090e0" stroke="#1060b0" stroke-width="0.6"/></svg>
<div class="t" style="left:123.60px;top:565.60px;font-size:10.4px;color:#000;transform:scaleX(0.9077);transform-origin:0 0;">40714544</div>
<div class="t" style="left:272.00px;top:565.60px;font-size:10.4px;color:#000;transform:scaleX(0.8769);transform-origin:0 0;">2017.01.11 15:30:07</div>
<div class="t" style="left:412.20px;top:565.60px;font-size:10.4px;color:#000;transform:scaleX(0.9840);transform-origin:0 0;">buy</div>
<div class="t" style="left:467.50px;top:565.60px;font-size:10.4px;color:#000;transform:scaleX(0.9387);transform-origin:0 0;">1.78</div>
<div class="t" style="left:527.80px;top:565.60px;font-size:10.4px;color:#000;transform:scaleX(1.0063);transform-origin:0 0;">eurusd</div>
<div class="t" style="left:606.90px;top:565.60px;font-size:10.4px;color:#000;transform:scaleX(0.9443);transform-origin:0 0;">1.04588</div>
<div class="t" style="left:688.50px;top:565.60px;font-size:10.4px;color:#000;transform:scaleX(0.9443);transform-origin:0 0;">0.00000</div>
<div class="t" style="left:771.00px;top:565.60px;font-size:10.4px;color:#000;transform:scaleX(0.9443);transform-origin:0 0;">0.00000</div>
<div class="t" style="left:853.00px;top:565.60px;font-size:10.4px;color:#000;transform:scaleX(0.9443);transform-origin:0 0;">1.06458</div>
<div class="t" style="left:950.50px;top:565.60px;font-size:10.4px;color:#000;transform:scaleX(0.8859);transform-origin:0 0;">-8.90</div>
<div class="t" style="left:1028.00px;top:565.60px;font-size:10.4px;color:#000;transform:scaleX(0.8817);transform-origin:0 0;">-34.47</div>
<div class="t" style="left:1128.50px;top:565.60px;font-size:10.4px;color:#000;transform:scaleX(0.8769);transform-origin:0 0;">3 328.60</div>
<svg class="a" style="left:1172px;top:566px" width="8" height="8"><path d="M1,1 L6.5,6.5 M6.5,1 L1,6.5" stroke="#909090" stroke-width="1.2"/></svg>
<div class="a" style="left:105px;top:578.5px;width:1081px;height:17.1px;background:#c8c8c8;"></div>
<svg class="a" style="left:106px;top:581px" width="13" height="13"><rect x="0.5" y="0.5" width="11" height="11" rx="1" fill="#f4f4f4" stroke="#707070"/><path d="M6,2.5 L9.5,6 H7.3 V9.5 H4.7 V6 H2.5z" fill="#10a030"/></svg>
<div class="t" style="left:123.60px;top:582.43px;font-size:10.6px;color:#000;font-weight:bold;transform:scaleX(0.9509);transform-origin:0 0;">Egyenleg: 18 851.17 USD  Saját tőke: 22 136.40  Letét: 372.33  Szabad margin: 21 764.07  Margin szint: 5945.32%</div>
<div class="t" style="left:1124.00px;top:582.43px;font-size:10.6px;color:#000;font-weight:bold;transform:scaleX(0.9694);transform-origin:0 0;">3 285.23</div>
<div class="a" style="left:104px;top:662.3px;width:1082px;height:1.2px;background:#303030;"></div>
<div class="a" style="left:106.6px;top:662.3px;width:67px;height:16.3px;background:#ffffff;border:1px solid #202020;border-top:none"></div>
<div class="t" style="left:115.30px;top:666.50px;font-size:10.4px;color:#000;transform:scaleX(0.9104);transform-origin:0 0;">Kereskedés</div>
<div class="t" style="left:182.00px;top:666.50px;font-size:10.4px;color:#808080;transform:scaleX(1.0132);transform-origin:0 0;">Kitettség</div>
<div class="t" style="left:238.80px;top:666.50px;font-size:10.4px;color:#808080;">Számlatörténet</div>
<div class="t" style="left:323.60px;top:666.50px;font-size:10.4px;color:#808080;transform:scaleX(0.9860);transform-origin:0 0;">Hírek</div>
<div class="t" style="left:370.50px;top:666.50px;font-size:10.4px;color:#808080;transform:scaleX(0.9241);transform-origin:0 0;">Riasztások</div>
<div class="t" style="left:434.20px;top:666.50px;font-size:10.4px;color:#808080;transform:scaleX(0.9188);transform-origin:0 0;">Levelesláda</div>
<div class="t" style="left:508.70px;top:666.50px;font-size:10.4px;color:#808080;transform:scaleX(0.8765);transform-origin:0 0;">Társaság</div>
<div class="t" style="left:565.30px;top:666.50px;font-size:10.4px;color:#808080;transform:scaleX(0.9391);transform-origin:0 0;">Piac</div>
<div class="t" style="left:601.70px;top:666.50px;font-size:10.4px;color:#808080;transform:scaleX(0.9536);transform-origin:0 0;">Szignálok</div>
<div class="t" style="left:661.60px;top:666.50px;font-size:10.4px;color:#808080;transform:scaleX(0.8999);transform-origin:0 0;">Kódbázis</div>
<div class="t" style="left:719.00px;top:666.50px;font-size:10.4px;color:#808080;transform:scaleX(0.9419);transform-origin:0 0;">Expert napló</div>
<div class="t" style="left:792.00px;top:666.50px;font-size:10.4px;color:#808080;transform:scaleX(0.9568);transform-origin:0 0;">Napló</div>
<div class="a" style="left:230.5px;top:666px;width:1px;height:11px;background:#808080;"></div>
<div class="a" style="left:315.8px;top:666px;width:1px;height:11px;background:#808080;"></div>
<div class="a" style="left:361.9px;top:666px;width:1px;height:11px;background:#808080;"></div>
<div class="a" style="left:425.6px;top:666px;width:1px;height:11px;background:#808080;"></div>
<div class="a" style="left:500.5px;top:666px;width:1px;height:11px;background:#808080;"></div>
<div class="a" style="left:556.7px;top:666px;width:1px;height:11px;background:#808080;"></div>
<div class="a" style="left:593px;top:666px;width:1px;height:11px;background:#808080;"></div>
<div class="a" style="left:653px;top:666px;width:1px;height:11px;background:#808080;"></div>
<div class="a" style="left:710.3px;top:666px;width:1px;height:11px;background:#808080;"></div>
<div class="a" style="left:783.4px;top:666px;width:1px;height:11px;background:#808080;"></div>
<div class="a" style="left:828.3px;top:666px;width:1px;height:11px;background:#808080;"></div>
<div class="t" style="left:349.20px;top:671.55px;font-size:7.5px;color:#ff0000;font-weight:bold;">1</div>
<div class="t" style="left:487.40px;top:671.55px;font-size:7.5px;color:#ff0000;font-weight:bold;">6</div>
<div class="a" style="left:91px;top:683px;width:1098px;height:20px;background:#f0f0f0;"></div>
<div class="a" style="left:91px;top:682.8px;width:1098px;height:1px;background:#a8a8a8;"></div>
<div class="a" style="left:91px;top:683.8px;width:1098px;height:1px;background:#ffffff;"></div>
<div class="t" style="left:92.80px;top:691.00px;font-size:10.4px;color:#000;transform:scaleX(0.9700);transform-origin:0 0;">Segítségért nyomja meg az F1 billentyűt</div>
<div class="a" style="left:594.2px;top:686px;width:1px;height:17px;background:#b0b0b0;"></div>
<div class="a" style="left:693.5px;top:686px;width:1px;height:17px;background:#b0b0b0;"></div>
<div class="a" style="left:781.5px;top:686px;width:1px;height:17px;background:#b0b0b0;"></div>
<div class="a" style="left:841.5px;top:686px;width:1px;height:17px;background:#b0b0b0;"></div>
<div class="a" style="left:902.5px;top:686px;width:1px;height:17px;background:#b0b0b0;"></div>
<div class="a" style="left:961.5px;top:686px;width:1px;height:17px;background:#b0b0b0;"></div>
<div class="a" style="left:1021.5px;top:686px;width:1px;height:17px;background:#b0b0b0;"></div>
<div class="a" style="left:1077.2px;top:686px;width:1px;height:17px;background:#b0b0b0;"></div>
<div class="t" style="left:599.00px;top:691.00px;font-size:10.4px;color:#000;transform:scaleX(0.9006);transform-origin:0 0;">Swiss Franc</div>
<div class="t" style="left:698.40px;top:691.00px;font-size:10.4px;color:#000;transform:scaleX(0.9016);transform-origin:0 0;">2016.10.17 00:00</div>
<div class="t" style="left:786.00px;top:691.00px;font-size:10.4px;color:#000;transform:scaleX(0.9522);transform-origin:0 0;">O: 1.09655</div>
<div class="t" style="left:846.50px;top:691.00px;font-size:10.4px;color:#000;transform:scaleX(0.9630);transform-origin:0 0;">H: 1.10140</div>
<div class="t" style="left:907.50px;top:691.00px;font-size:10.4px;color:#000;transform:scaleX(0.9765);transform-origin:0 0;">L: 1.09636</div>
<div class="t" style="left:966.50px;top:691.00px;font-size:10.4px;color:#000;transform:scaleX(0.9630);transform-origin:0 0;">C: 1.10107</div>
<div class="t" style="left:1026.50px;top:691.00px;font-size:10.4px;color:#000;transform:scaleX(0.9455);transform-origin:0 0;">V: 78271</div>
<div class="t" style="left:1105.70px;top:691.00px;font-size:10.4px;color:#000;transform:scaleX(0.9599);transform-origin:0 0;">458/2 kb</div>
<svg class="a" style="left:1082px;top:689px" width="21" height="12"><rect x="0.5" y="0" width="1.3" height="6" fill="#508020"/><rect x="0.5" y="10.8" width="1.3" height="1.2" fill="#c02020"/><rect x="2.7" y="0" width="1.3" height="6" fill="#508020"/><rect x="2.7" y="10.2" width="1.3" height="1.8" fill="#c02020"/><rect x="4.9" y="0" width="1.3" height="6" fill="#508020"/><rect x="4.9" y="9.6" width="1.3" height="2.4" fill="#c02020"/><rect x="7.1" y="0" width="1.3" height="6" fill="#508020"/><rect x="7.1" y="9.0" width="1.3" height="3.0" fill="#c02020"/><rect x="9.3" y="0" width="1.3" height="6" fill="#508020"/><rect x="9.3" y="8.4" width="1.3" height="3.6" fill="#c02020"/><rect x="11.5" y="0" width="1.3" height="6" fill="#508020"/><rect x="11.5" y="7.8" width="1.3" height="4.2" fill="#c02020"/><rect x="13.7" y="0" width="1.3" height="6" fill="#508020"/><rect x="13.7" y="7.2" width="1.3" height="4.8" fill="#c02020"/><rect x="15.9" y="0" width="1.3" height="6" fill="#508020"/><rect x="15.9" y="6.6" width="1.3" height="5.4" fill="#c02020"/><rect x="18.1" y="0" width="1.3" height="6" fill="#508020"/><rect x="18.1" y="6.0" width="1.3" height="6.0" fill="#c02020"/></svg>
<div class="a" style="left:1188px;top:89px;width:1px;height:614px;background:#e4e4e4;"></div>
</body></html>
